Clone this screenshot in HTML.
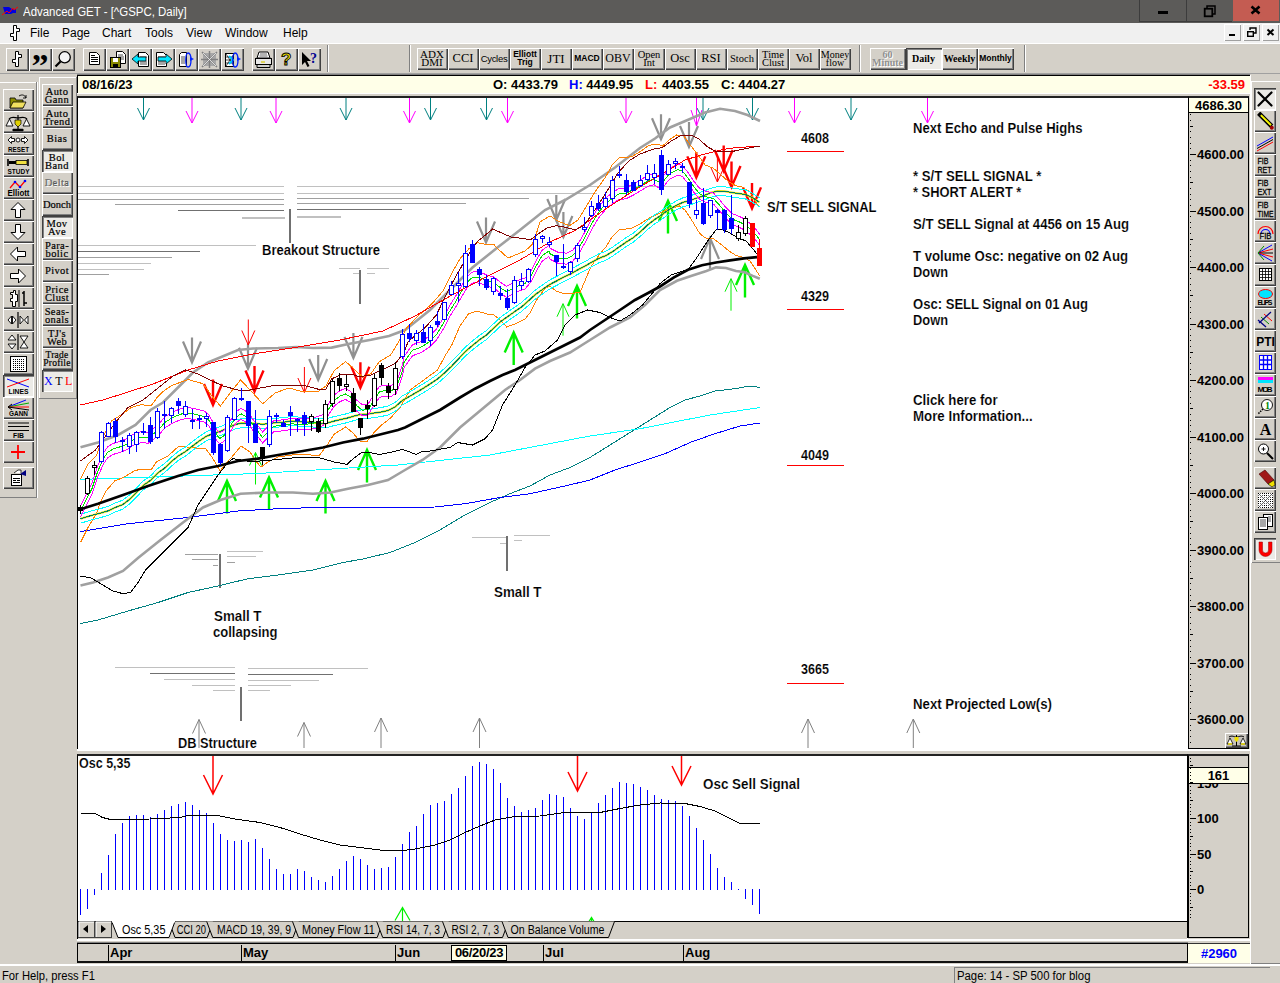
<!DOCTYPE html><html><head><meta charset="utf-8"><title>Advanced GET</title><style>
*{box-sizing:border-box;margin:0;padding:0}
html,body{width:1280px;height:983px;overflow:hidden;background:#d4d0c8;font-family:"Liberation Sans",sans-serif;font-size:12px;color:#000}
.a{position:absolute}
#title{left:0;top:0;width:1280px;height:23px;background:#5c5b59;color:#fff;font-size:12px;line-height:22px}
#title .t{left:23px;top:1px;white-space:nowrap;transform:scaleX(.955);transform-origin:0 0}
.wb{top:0;height:22px;border-left:1px solid #3c3c3c;border-bottom:1px solid #3c3c3c;color:#000;text-align:center;font-weight:bold}
#menu{left:0;top:23px;width:1280px;height:20px;background:#f0f0f0;font-size:12px;line-height:20px}
#menu span{position:absolute;top:0;white-space:nowrap}
.mb{top:25px;width:17px;height:16px;background:#f0f0f0;box-shadow:inset 1px 1px #fff,inset -1px -1px #a0a0a0;font-size:10px;font-weight:bold;text-align:center;line-height:15px}
.btn{position:absolute;background:#d4d0c8;box-shadow:inset 1px 1px #fff,inset -1px -1px #404040,inset -2px -2px #808080;overflow:hidden}
.btn.p{box-shadow:inset 1px 1px #404040,inset 2px 2px #808080,inset -1px -1px #fff;background:#ecebe7}
.tb{top:48px;width:23px;height:23px}
.sb{top:48px;width:31px;height:22px;font-family:"Liberation Serif",serif;font-size:11px;line-height:9px;text-align:center;white-space:nowrap}
.sb span{position:absolute;left:0;right:1px;text-align:center}
.lb{left:3px;width:31px;height:22px}
.lb2{left:42px;width:31px;height:22px;font-family:"Liberation Serif",serif;font-size:10.5px;line-height:9px;text-align:center;font-weight:normal;-webkit-text-stroke:.2px #000;white-space:nowrap;letter-spacing:.4px}
.lb2 span{position:absolute;left:0;right:1px;text-align:center}
.rb{left:1254px;width:22px;height:22px}
.ic{position:absolute;left:0;top:0}
.tiny{font-family:"Liberation Sans",sans-serif;font-size:8px;font-weight:bold;letter-spacing:0}
.sunk{box-shadow:inset 1px 1px #808080,inset -1px -1px #fff}
.bt{font-weight:bold;white-space:nowrap}
.rb{left:1254px;width:22px;height:22px}</style></head><body><div id="title" class="a"><svg class="ic" width="22" height="22" viewBox="0 0 22 22" ><path d="M3 7h6l3 2h4v4h-3l-2 1h-6z" fill="#0000e0"/><path d="M2 15l5-4 2 2 4-5 1 2 4-3" stroke="#ff0000" stroke-width="1" fill="none"/></svg><div class="a t">Advanced GET - [^GSPC, Daily]</div><div class="a wb" style="left:1139px;width:47px"><svg class="ic" width="46" height="22" viewBox="0 0 46 22" ><rect x="18" y="11" width="10" height="3" fill="#000"/></svg></div><div class="a wb" style="left:1186px;width:46px"><svg class="ic" width="46" height="22" viewBox="0 0 46 22" ><path d="M20 8v-2h8v8h-2" stroke="#000" stroke-width="1.5" fill="none"/><rect x="17.7" y="8.7" width="7.6" height="7.6" stroke="#000" stroke-width="1.8" fill="none"/></svg></div><div class="a wb" style="left:1232px;width:48px;background:#c45c52;border-left:0;border-bottom:0;height:21px;width:46px;left:1233px"><svg class="ic" width="46" height="22" viewBox="0 0 46 22" ><path d="M18.5 6.5l8 7M26.500 6.500l-8 7" stroke="#000" stroke-width="2.6" fill="none"/></svg></div></div><div id="menu" class="a"><svg class="ic" width="30" height="20" viewBox="0 0 30 20" ><path d="M13.500 2.500h3v3h3v3h-3v9h-3v-4h-3v-3h3z" fill="#fff" stroke="#000" stroke-width="1"/></svg><span style="left:30px">File</span><span style="left:62px">Page</span><span style="left:102px">Chart</span><span style="left:145px">Tools</span><span style="left:186px">View</span><span style="left:225px">Window</span><span style="left:283px">Help</span></div><div class="a mb" style="left:1224px;top:24px;height:17px"><svg class="ic" width="17" height="16" viewBox="0 0 17 16" ><rect x="5" y="10" width="6" height="2" fill="#000"/></svg></div><div class="a mb" style="left:1243px;top:24px;height:17px"><svg class="ic" width="17" height="16" viewBox="0 0 17 16" ><path d="M7 6v-2h6v5h-2" stroke="#000" stroke-width="1.400" fill="none"/><rect x="4.7" y="7.700" width="5.600" height="4.600" stroke="#000" stroke-width="1.400" fill="none"/></svg></div><div class="a mb" style="left:1262px;top:24px;height:17px"><svg class="ic" width="17" height="16" viewBox="0 0 17 16" ><path d="M5.500 5.500l6 5.500M11.500 5.500l-6 5.500" stroke="#000" stroke-width="2" fill="none"/></svg></div><div class="a" style="left:0;top:43px;width:1280px;height:31px;background:#d4d0c8;border-top:1px solid #fff;box-shadow:0 -1px #a0a0a0 inset"></div><div class="btn tb" style="left:6px"><svg class="ic" width="23" height="23" viewBox="0 0 23 23" ><path d="M9.500 3.500h3v3h3v3h-3v9h-3v-4h-3v-3h3z" fill="#fff" stroke="#000" stroke-width="1"/></svg></div><div class="btn tb" style="left:29px"><svg class="ic" width="23" height="23" viewBox="0 0 23 23" ><text x="2.500" y="29" font-size="34" font-weight="bold" font-family="Liberation Serif,serif">”</text></svg></div><div class="btn tb" style="left:52px"><svg class="ic" width="23" height="23" viewBox="0 0 23 23" ><circle cx="12.700" cy="9.300" r="5.600" fill="#f4f4f4" stroke="#000" stroke-width="1.300"/><path d="M8.500 13.500l-5 5" stroke="#000" stroke-width="2.200"/></svg></div><div class="btn tb" style="left:83px"><svg class="ic" width="23" height="23" viewBox="0 0 23 23" ><path d="M6.500 4.500h7l3 3v9h-10z" fill="#fff" stroke="#000"/><path d="M8 7.500h4M8 9.500h7M8 11.500h7M8 13.500h7" stroke="#000" stroke-width="1" shape-rendering="crispEdges"/></svg></div><div class="btn tb" style="left:106px"><svg class="ic" width="23" height="23" viewBox="0 0 23 23" ><path d="M10.500 3.500h6l3 3v9h-9z" fill="#fff" stroke="#000"/><path d="M12 7h5M12 9h6M12 11h6" stroke="#000" stroke-width=".7"/><rect x="4.500" y="9.500" width="10" height="10" fill="#8a8a00" stroke="#000"/><rect x="7" y="10" width="5" height="4" fill="#fff"/><rect x="7" y="16" width="5" height="3" fill="#000"/></svg></div><div class="btn tb" style="left:129px"><svg class="ic" width="23" height="23" viewBox="0 0 23 23" ><path d="M9.500 4.500h7l3 3v11h-10z" fill="#fff" stroke="#000"/><path d="M11 9h7M11 14h7M11 16h7" stroke="#000" stroke-width=".7"/><path d="M3 11l6-5v3h8v4h-8v3z" fill="#00e5ff" stroke="#000" stroke-width=".8"/></svg></div><div class="btn tb" style="left:152px"><svg class="ic" width="23" height="23" viewBox="0 0 23 23" ><path d="M4.500 4.500h7l3 3v11h-10z" fill="#fff" stroke="#000"/><path d="M6 9h7M6 14h7M6 16h7" stroke="#000" stroke-width=".7"/><path d="M20 11l-6-5v3h-8v4h8v3z" fill="#00e5ff" stroke="#000" stroke-width=".8"/></svg></div><div class="btn tb" style="left:175px"><svg class="ic" width="23" height="23" viewBox="0 0 23 23" ><path d="M4.500 6.500l2-2h5v14h-7z" fill="#fff" stroke="#000"/><path d="M6 9h4M6 11h4M6 13h4M6 15h4" stroke="#000" stroke-width=".7"/><path d="M13 5c4 0 4 14 0 14c-3 0-3-14 0-14" fill="none" stroke="#0020ff" stroke-width="1.300"/><path d="M15 9l4 2-4 2z" fill="#0020ff"/></svg></div><div class="btn tb" style="left:198px"><svg class="ic" width="23" height="23" viewBox="0 0 23 23" ><rect x="5" y="5" width="13" height="13" fill="#a8a8a8"/><path d="M4 4l15 15M19 4l-15 15M11.500 3v17M3 11.500h17" stroke="#808080" stroke-width="1.500"/><path d="M5 5l13 13M18 5l-13 13" stroke="#f4f4f4" stroke-width=".8"/></svg></div><div class="btn tb" style="left:221px"><svg class="ic" width="23" height="23" viewBox="0 0 23 23" ><rect x="4.500" y="5.500" width="8" height="13" fill="#fff" stroke="#000"/><path d="M5 6l8 12M13 6l-8 12M5 9h8M5 12h8M5 15h8" stroke="#000" stroke-width=".7"/><path d="M8 8l4 4-4 4" stroke="#00c8ff" stroke-width="2" fill="none"/><path d="M14 5c4 0 4 14 0 14c-3 0-3-14 0-14" fill="none" stroke="#0020ff" stroke-width="1.300"/><path d="M16 9l4 2-4 2z" fill="#0020ff"/></svg></div><div class="btn tb" style="left:252px"><svg class="ic" width="23" height="23" viewBox="0 0 23 23" ><path d="M7 4h9l2 6h-13z" fill="#fff" stroke="#000"/><rect x="3.500" y="10.500" width="16" height="6" fill="#e8e8e8" stroke="#000"/><path d="M5 16.500h13v3h-13z" fill="#d0d0d0" stroke="#000"/><path d="M9 14h4" stroke="#d8c800" stroke-width="1.200"/><path d="M8 6h7M7.500 8h8" stroke="#000" stroke-width=".6"/></svg></div><div class="btn tb" style="left:275px"><svg class="ic" width="23" height="23" viewBox="0 0 23 23" ><text x="6" y="17" font-size="17" font-weight="bold" font-family="Liberation Sans,sans-serif" fill="#f0e000" stroke="#000" stroke-width=".9">?</text></svg></div><div class="btn tb" style="left:298px"><svg class="ic" width="23" height="23" viewBox="0 0 23 23" ><path d="M4 4v13l3-3 2.500 5 2-1-2.500-5h4z" fill="#000"/><text x="12" y="15" font-size="14" font-weight="bold" font-family="Liberation Serif,serif" fill="#000090">?</text></svg></div><div class="a" style="left:327px;top:45px;width:2px;height:27px;border-left:1px solid #808080;border-right:1px solid #fff"></div><div class="a" style="left:409px;top:45px;width:2px;height:27px;border-left:1px solid #808080;border-right:1px solid #fff"></div><div class="a" style="left:859px;top:45px;width:2px;height:27px;border-left:1px solid #808080;border-right:1px solid #fff"></div><div class="a" style="left:1024px;top:45px;width:2px;height:27px;border-left:1px solid #808080;border-right:1px solid #fff"></div><div class="btn sb" style="left:417px"><span style="top:2px;font-size:11px">ADX</span><span style="top:10px;font-size:11px">DMI</span></div><div class="btn sb" style="left:448px"><span style="top:6px;font-size:12.5px">CCI</span></div><div class="btn sb" style="left:479px"><span style="top:6px;font-size:9.5px;font-family:Liberation Sans,sans-serif;letter-spacing:-.3px">Cycles</span></div><div class="btn sb" style="left:510px"><span style="top:2px;font-size:8.5px;font-family:Liberation Sans,sans-serif;font-weight:bold">Elliott</span><span style="top:10px;font-size:8.5px;font-family:Liberation Sans,sans-serif;font-weight:bold">Trig</span></div><div class="btn sb" style="left:541px"><span style="top:6px;font-size:13px">JTI</span></div><div class="btn sb" style="left:572px"><span style="top:6px;font-size:8.5px;font-family:Liberation Sans,sans-serif;font-weight:bold">MACD</span></div><div class="btn sb" style="left:603px"><span style="top:6px;font-size:12px">OBV</span></div><div class="btn sb" style="left:634px"><span style="top:2px;font-size:10.5px">Open</span><span style="top:10px;font-size:10.5px">Int</span></div><div class="btn sb" style="left:665px"><span style="top:6px;font-size:12.5px">Osc</span></div><div class="btn sb" style="left:696px"><span style="top:6px;font-size:12.5px">RSI</span></div><div class="btn sb" style="left:727px"><span style="top:6px;font-size:10.5px">Stoch</span></div><div class="btn sb" style="left:758px"><span style="top:2px;font-size:10.5px">Time</span><span style="top:10px;font-size:10.5px">Clust</span></div><div class="btn sb" style="left:789px"><span style="top:6px;font-size:12.5px">Vol</span></div><div class="btn sb" style="left:820px"><span style="top:2px;font-size:10px">Money</span><span style="top:10px;font-size:10px">flow</span></div><div class="btn sb" style="left:870px;width:36px;font-weight:bold;font-size:10px;color:#909090;text-shadow:1px 1px #fff;"><span style="top:2px">60</span><span style="top:10px">Minute</span></div><div class="btn sb p" style="left:906px;width:36px;font-weight:bold;font-size:10px;"><span style="top:6px;">Daily</span></div><div class="btn sb" style="left:942px;width:36px;font-weight:bold;font-size:10px;"><span style="top:6px;">Weekly</span></div><div class="btn sb" style="left:978px;width:36px;font-weight:bold;font-size:10px;"><span style="top:6px;font-family:Liberation Sans,sans-serif;font-size:8.5px;">Monthly</span></div><div class="a" style="left:0;top:82px;width:38px;height:416px;box-shadow:inset -1px -1px #808080,inset 0 1px #fff;border-right:1px solid #fff"></div><div class="a" style="left:39px;top:77px;width:38px;height:322px;box-shadow:inset -1px -1px #808080,inset 1px 1px #fff"></div><div class="btn lb" style="top:89px"><svg class="ic" width="30" height="22" viewBox="0 0 30 22" ><path d="M7 9h5l1 2h7v8h-13z" fill="#8c8c00" stroke="#000" stroke-width=".8"/><path d="M7 19l3-6h13l-3 6z" fill="#f0e060" stroke="#000" stroke-width=".8"/><path d="M16 7c3-2 6-1 7 2m0-3v3h-3" stroke="#000" stroke-width=".9" fill="none"/></svg></div><div class="btn lb" style="top:111px"><svg class="ic" width="30" height="22" viewBox="0 0 30 22" ><path d="M15 4v15M9 19h12M6 8c3-3 6-1 9-1s6-2 9 1" stroke="#000" stroke-width="1.200" fill="none"/><path d="M3 15l3.500-7 3.500 7zM20 15l3.500-7 3.500 7z" fill="#fff" stroke="#000" stroke-width=".9"/><path d="M12 9h6v4l-3 3-3-3z" fill="#e0d000" stroke="#000" stroke-width=".7"/><path d="M10 19h10" stroke="#000" stroke-width="2.500"/></svg></div><div class="btn lb" style="top:133px"><svg class="ic" width="30" height="22" viewBox="0 0 30 22" ><path d="M5 7l3.500-3.500v2h3v3h-3v2zM25 7l-3.500-3.500v2h-3v3h3v2z" fill="#fff" stroke="#000" stroke-width=".9"/><circle cx="15" cy="7" r="2" fill="#fff" stroke="#000" stroke-width=".9"/><text x="15.5" y="18.5" font-size="7.5" font-weight="bold" font-family="Liberation Sans,sans-serif" text-anchor="middle" textLength="21" lengthAdjust="spacingAndGlyphs">RESET</text></svg></div><div class="btn lb" style="top:155px"><svg class="ic" width="30" height="22" viewBox="0 0 30 22" ><path d="M5 4v7M25 4v7" stroke="#000" stroke-width="1.600"/><rect x="6" y="6" width="7" height="3" fill="#000"/><rect x="13" y="5.500" width="11" height="4" fill="#f0e040" stroke="#000" stroke-width=".8"/><text x="15.5" y="18.5" font-size="7.5" font-weight="bold" font-family="Liberation Sans,sans-serif" text-anchor="middle" textLength="22" lengthAdjust="spacingAndGlyphs">STUDY</text></svg></div><div class="btn lb" style="top:177px"><svg class="ic" width="30" height="22" viewBox="0 0 30 22" ><path d="M7 11l5-6 5 5 5-6" stroke="#f00" stroke-width="1.200" fill="none"/><circle cx="12" cy="5" r="1.300" fill="#00f"/><circle cx="17" cy="10" r="1.300" fill="#00f"/><circle cx="22" cy="4" r="1.300" fill="#00f"/><text x="15.5" y="18.5" font-size="9" font-weight="bold" font-family="Liberation Sans,sans-serif" text-anchor="middle" textLength="22" lengthAdjust="spacingAndGlyphs">Elliott</text></svg></div><div class="btn lb" style="top:199px"><svg class="ic" width="30" height="22" viewBox="0 0 30 22" ><path d="M15 3.500l7 7h-4.500v8h-5v-8h-4.500z" fill="#fff" stroke="#000" stroke-width="1"/></svg></div><div class="btn lb" style="top:221px"><svg class="ic" width="30" height="22" viewBox="0 0 30 22" ><path d="M15 18.500l7-7h-4.500v-8h-5v8h-4.500z" fill="#fff" stroke="#000" stroke-width="1"/></svg></div><div class="btn lb" style="top:243px"><svg class="ic" width="30" height="22" viewBox="0 0 30 22" ><path d="M7.500 11l7-7v4.500h8v5h-8v4.500z" fill="#fff" stroke="#000" stroke-width="1"/></svg></div><div class="btn lb" style="top:265px"><svg class="ic" width="30" height="22" viewBox="0 0 30 22" ><path d="M22.500 11l-7-7v4.500h-8v5h8v4.500z" fill="#fff" stroke="#000" stroke-width="1"/></svg></div><div class="btn lb" style="top:287px"><svg class="ic" width="30" height="22" viewBox="0 0 30 22" ><path d="M10.500 3.500h2v4h2v7h-2v5h-3v-5h-2v-3h2v-4h-2v-2h3z" fill="#fff" stroke="#000" stroke-width="1"/><path d="M16 3v17" stroke="#000" stroke-width="1"/><path d="M21 4v15M19 6h2M21 16h3" stroke="#000" stroke-width="1.500"/></svg></div><div class="btn lb" style="top:309px"><svg class="ic" width="30" height="22" viewBox="0 0 30 22" ><path d="M15 3v16" stroke="#000" stroke-width="1.200"/><path d="M5 11l3.500-4v8zM13 11l-3.500-4v8zM17 7v8l3.500-4zM25 7v8l-3.500-4z" fill="#fff" stroke="#000" stroke-width=".9"/></svg></div><div class="btn lb" style="top:331px"><svg class="ic" width="30" height="22" viewBox="0 0 30 22" ><path d="M15 3v16" stroke="#000" stroke-width="1.200"/><path d="M9 4l4 5h-8zM9 18l4-5h-8zM17 5h8l-4 6 4 6h-8l4-6z" fill="#fff" stroke="#000" stroke-width=".9"/></svg></div><div class="btn lb" style="top:353px"><svg class="ic" width="30" height="22" viewBox="0 0 30 22" ><defs><pattern id="dots" width="2" height="2" patternUnits="userSpaceOnUse"><rect width="1" height="1" fill="#000"/></pattern></defs><rect x="7.500" y="3.500" width="16" height="15" fill="#fff" stroke="#000"/><rect x="9" y="5" width="13" height="12" fill="url(#dots)"/></svg></div><div class="btn lb p" style="top:375px"><svg class="ic" width="30" height="22" viewBox="0 0 30 22" ><path d="M4 4l22 8" stroke="#00f" stroke-width="1"/><path d="M4 12l22-8" stroke="#f00" stroke-width="1"/><text x="15.5" y="18.5" font-size="7.5" font-weight="bold" font-family="Liberation Sans,sans-serif" text-anchor="middle" textLength="20" lengthAdjust="spacingAndGlyphs">LINES</text></svg></div><div class="btn lb" style="top:397px"><svg class="ic" width="30" height="22" viewBox="0 0 30 22" ><path d="M5 10l18-7" stroke="#00f"/><path d="M5 10l21-4" stroke="#0a0"/><path d="M5 10h21" stroke="#f00"/><path d="M5 10l21 3" stroke="#000"/><path d="M9 7l-4 3 4 3" stroke="#000" fill="none"/><text x="15.5" y="18.5" font-size="7.5" font-weight="bold" font-family="Liberation Sans,sans-serif" text-anchor="middle" textLength="19" lengthAdjust="spacingAndGlyphs">GANN</text></svg></div><div class="btn lb" style="top:419px"><svg class="ic" width="30" height="22" viewBox="0 0 30 22" ><path d="M5 4h21M5 7.500h21M5 11.500h21" stroke="#000" stroke-width="1.200"/><text x="15.5" y="18.5" font-size="7.5" font-weight="bold" font-family="Liberation Sans,sans-serif" text-anchor="middle" textLength="11" lengthAdjust="spacingAndGlyphs">FIB</text></svg></div><div class="btn lb" style="top:441px"><svg class="ic" width="30" height="22" viewBox="0 0 30 22" ><path d="M15 4v14M8 11h14" stroke="#f00" stroke-width="1.800"/></svg></div><div class="btn lb" style="top:467px"><svg class="ic" width="30" height="22" viewBox="0 0 30 22" ><rect x="8.500" y="7.500" width="10" height="11" fill="#fff" stroke="#000"/><path d="M10 11.500h7M10 13.500h3M14 13.500h3M10 15.500h7" stroke="#000" stroke-width="1" shape-rendering="crispEdges"/><path d="M11 6l4-3h3v3" fill="#fff" stroke="#000" stroke-width=".8"/><path d="M17 7l6-4v6z" fill="#000080"/></svg></div><div class="btn lb2" style="top:84px;"><span style="top:3px;">Auto</span><span style="top:11px;">Gann</span></div><div class="btn lb2" style="top:106px;"><span style="top:3px;">Auto</span><span style="top:11px;">Trend</span></div><div class="btn lb2" style="top:128px;"><span style="top:6px;font-size:10.5px;letter-spacing:.4px">Bias</span></div><div class="btn lb2 p" style="top:150px;"><span style="top:3px;">Bol</span><span style="top:11px;">Band</span></div><div class="btn lb2" style="top:172px;color:#909090;text-shadow:1px 1px #fff;"><span style="top:6px;font-size:10.5px;letter-spacing:.4px">Delta</span></div><div class="btn lb2" style="top:194px;"><span style="top:6px;font-size:10.5px;letter-spacing:0">Donch</span></div><div class="btn lb2 p" style="top:216px;"><span style="top:3px;">Mov</span><span style="top:11px;">Ave</span></div><div class="btn lb2" style="top:238px;"><span style="top:3px;">Para-</span><span style="top:11px;">bolic</span></div><div class="btn lb2" style="top:260px;"><span style="top:6px;font-size:10.5px;letter-spacing:.4px">Pivot</span></div><div class="btn lb2" style="top:282px;"><span style="top:3px;">Price</span><span style="top:11px;">Clust</span></div><div class="btn lb2" style="top:304px;"><span style="top:3px;">Seas-</span><span style="top:11px;">onals</span></div><div class="btn lb2" style="top:326px;"><span style="top:3px;">TJ's</span><span style="top:11px;">Web</span></div><div class="btn lb2" style="top:348px;"><span style="top:3px;font-size:9.5px;letter-spacing:.2px;">Trade</span><span style="top:11px;font-size:9.5px;letter-spacing:.2px;">Profile</span></div><div class="btn lb2 p" style="top:370px;"><span style="top:7px;left:2px;font-size:12px;font-weight:normal;letter-spacing:2.5px;-webkit-text-stroke:0"><b style="color:#00f;font-weight:normal">X</b>T<b style="color:#f00;font-weight:normal">L</b></span></div><div class="a" style="left:1251px;top:81px;width:29px;height:482px;box-shadow:inset 1px 1px #fff,inset 0 -1px #808080"></div><div class="btn rb p" style="top:88px"><svg class="ic" width="22" height="22" viewBox="0 0 22 22" ><path d="M4.500 4.500l13 13M17.500 4.500l-13 13" stroke="#000" stroke-width="2.200" stroke-linecap="round"/></svg></div><div class="btn rb" style="top:110px"><svg class="ic" width="22" height="22" viewBox="0 0 22 22" ><path d="M4 5l2.500-2.500 12 12-2.500 2.500z" fill="#f0f000" stroke="#000" stroke-width="1.200"/><path d="M5.500 5.500l11 11" stroke="#000" stroke-width=".7"/><path d="M3.500 4.500l2.500-2.500 2 2-2.500 2.500z" fill="#000"/><circle cx="17.800" cy="17.800" r="2" fill="#a00000"/></svg></div><div class="btn rb" style="top:132px"><svg class="ic" width="22" height="22" viewBox="0 0 22 22" ><path d="M3 14l16-9" stroke="#00f"/><path d="M3 16.500l16-9" stroke="#000"/><path d="M3 19l16-9" stroke="#f00"/></svg></div><div class="btn rb" style="top:154px"><svg class="ic" width="22" height="22" viewBox="0 0 22 22" ><text x="3.500" y="10" font-size="9.500" font-family="Liberation Sans,sans-serif" textLength="11" lengthAdjust="spacingAndGlyphs" stroke="#000" stroke-width=".3">FIB</text><text x="3.500" y="18.500" font-size="9.500" font-family="Liberation Sans,sans-serif" textLength="14" lengthAdjust="spacingAndGlyphs" stroke="#000" stroke-width=".3">RET</text></svg></div><div class="btn rb" style="top:176px"><svg class="ic" width="22" height="22" viewBox="0 0 22 22" ><text x="3.500" y="10" font-size="9.500" font-family="Liberation Sans,sans-serif" textLength="11" lengthAdjust="spacingAndGlyphs" stroke="#000" stroke-width=".3">FIB</text><text x="3.500" y="18.500" font-size="9.500" font-family="Liberation Sans,sans-serif" textLength="14" lengthAdjust="spacingAndGlyphs" stroke="#000" stroke-width=".3">EXT</text></svg></div><div class="btn rb" style="top:198px"><svg class="ic" width="22" height="22" viewBox="0 0 22 22" ><text x="3.500" y="10" font-size="9.500" font-family="Liberation Sans,sans-serif" textLength="11" lengthAdjust="spacingAndGlyphs" stroke="#000" stroke-width=".3">FIB</text><text x="3.500" y="18.500" font-size="9.500" font-family="Liberation Sans,sans-serif" textLength="16" lengthAdjust="spacingAndGlyphs" stroke="#000" stroke-width=".3">TIME</text></svg></div><div class="btn rb" style="top:220px"><svg class="ic" width="22" height="22" viewBox="0 0 22 22" ><path d="M4 14a7.500 7.500 0 0 1 15 0" fill="none" stroke="#f00" stroke-width="1.200"/><path d="M7 14a4.500 4.500 0 0 1 9 0" fill="none" stroke="#00f" stroke-width="1.200"/><text x="5.500" y="19" font-size="9" font-family="Liberation Sans,sans-serif" textLength="12" lengthAdjust="spacingAndGlyphs" stroke="#000" stroke-width=".3">FIB</text></svg></div><div class="btn rb" style="top:242px"><svg class="ic" width="22" height="22" viewBox="0 0 22 22" ><path d="M4 11l14-8" stroke="#00f"/><path d="M4 11l15-4" stroke="#f00"/><path d="M4 11h15" stroke="#000"/><path d="M4 11l15 4" stroke="#f00"/><path d="M4 11l14 8" stroke="#00f"/><path d="M10 4l-6 7 6 7" stroke="#080" fill="none"/></svg></div><div class="btn rb" style="top:264px"><svg class="ic" width="22" height="22" viewBox="0 0 22 22" ><rect x="5.500" y="4.500" width="12" height="12" fill="#fff" stroke="#000"/><path d="M8.500 4v13M11.500 4v13M14.500 4v13M5 7.500h13M5 10.500h13M5 13.500h13" stroke="#000" stroke-width=".8"/></svg></div><div class="btn rb" style="top:286px"><svg class="ic" width="22" height="22" viewBox="0 0 22 22" ><ellipse cx="11.500" cy="8" rx="7" ry="4.500" fill="#00e5ff" stroke="#f00" stroke-width="1"/><text x="3.500" y="19" font-size="7" font-family="Liberation Sans,sans-serif" font-weight="bold" textLength="15">ELIPS</text></svg></div><div class="btn rb" style="top:308px"><svg class="ic" width="22" height="22" viewBox="0 0 22 22" ><path d="M4 12l8 7" stroke="#000080" stroke-width="1.300"/><path d="M7 9l8 7" stroke="#080"/><path d="M10 6l8 7" stroke="#f00"/><path d="M5 15l12-11" stroke="#000080" stroke-width="1.200"/></svg></div><div class="btn rb" style="top:330px"><svg class="ic" width="22" height="22" viewBox="0 0 22 22" ><text x="11.500" y="16" font-size="12" font-family="Liberation Sans,sans-serif" font-weight="bold" text-anchor="middle">PTI</text></svg></div><div class="btn rb" style="top:352px"><svg class="ic" width="22" height="22" viewBox="0 0 22 22" ><rect x="5.500" y="3.500" width="12" height="14" fill="#fff" stroke="#00f"/><path d="M9.500 3v15M13.500 3v15M5 8h13M5 12.500h13" stroke="#00f" stroke-width="1.300"/></svg></div><div class="btn rb" style="top:374px"><svg class="ic" width="22" height="22" viewBox="0 0 22 22" ><rect x="4" y="3" width="15" height="3" fill="#f0f"/><rect x="4" y="6" width="15" height="3" fill="#00e5ff"/><text x="3.500" y="18" font-size="8" font-family="Liberation Sans,sans-serif" font-weight="bold" textLength="15">MOB</text></svg></div><div class="btn rb" style="top:396px"><svg class="ic" width="22" height="22" viewBox="0 0 22 22" ><circle cx="13" cy="9" r="5.500" fill="#fff" stroke="#000" stroke-width=".9"/><path d="M9 13l-5 5" stroke="#000" stroke-width="1.500" stroke-dasharray="1.500 1"/><text x="11" y="13" font-size="10" font-weight="bold" fill="#080" font-family="Liberation Serif,serif">1</text></svg></div><div class="btn rb" style="top:418px"><svg class="ic" width="22" height="22" viewBox="0 0 22 22" ><text x="11.500" y="17" font-size="16" font-family="Liberation Serif,serif" font-weight="bold" text-anchor="middle">A</text></svg></div><div class="btn rb" style="top:440px"><svg class="ic" width="22" height="22" viewBox="0 0 22 22" ><circle cx="9.500" cy="9" r="5" fill="#fff" stroke="#000" stroke-width="1"/><path d="M13 13l6 6" stroke="#000" stroke-width="2"/><path d="M7.500 9h4M9.500 7v4" stroke="#000" stroke-width=".9"/></svg></div><div class="btn rb" style="top:467px"><svg class="ic" width="22" height="22" viewBox="0 0 22 22" ><path d="M5 7l6-4 9 10-6 4z" fill="#a01818" stroke="#400" stroke-width=".6"/><path d="M14 17l6-4 1 5-3 2z" fill="#f0e000" stroke="#000" stroke-width=".6"/></svg></div><div class="btn rb" style="top:489px"><svg class="ic" width="22" height="22" viewBox="0 0 22 22" ><defs><pattern id="d2" width="2" height="2" patternUnits="userSpaceOnUse"><rect width="1" height="1" fill="#000"/></pattern></defs><rect x="4" y="4" width="15" height="15" fill="#fff"/><rect x="4" y="4" width="15" height="15" fill="url(#d2)"/><path d="M5 5l13 13M18 5l-13 13" stroke="#fff" stroke-width="2.500"/><path d="M5 5l13 13M18 5l-13 13" stroke="#000" stroke-width=".6"/></svg></div><div class="btn rb" style="top:511px"><svg class="ic" width="22" height="22" viewBox="0 0 22 22" ><rect x="9.500" y="3.500" width="9" height="12" fill="#fff" stroke="#000"/><rect x="4.500" y="6.500" width="9" height="12" fill="#fff" stroke="#000"/><path d="M6 9h6M6 11h6M6 13h6M6 15h6M14 6h3M14 8h3M14 10h3" stroke="#000" stroke-width=".7"/></svg></div><div class="btn rb p" style="top:538px"><svg class="ic" width="22" height="22" viewBox="0 0 22 22" ><path d="M5 4v8a6.500 6.500 0 0 0 13 0v-8h-3.500v8a3 3 0 0 1-6 0v-8z" fill="#f00" stroke="#900" stroke-width=".5"/></svg></div><div class="a" style="left:77px;top:75px;width:1173px;height:18px;background:#ffffe8;border-top:1px solid #000;border-left:1px solid #000;box-shadow:0 -1px #808080,0 1px #fff,1px 0 #fff"></div><div class="a bt" style="left:82px;top:77px;font-size:13px;line-height:15px">08/16/23</div><div class="a bt" style="left:493px;top:77px;font-size:13px;line-height:15px">O: 4433.79</div><div class="a bt" style="left:569px;top:77px;font-size:13px;line-height:15px"><span style="color:#00f">H:</span> 4449.95</div><div class="a bt" style="left:645px;top:77px;font-size:13px;line-height:15px"><span style="color:#f00">L:</span><span class="a" style="left:17px">4403.55</span></div><div class="a bt" style="left:721px;top:77px;font-size:13px;line-height:15px">C: 4404.27</div><div class="a bt" style="left:1180px;width:65px;text-align:right;color:#f00;top:77px;font-size:13px;line-height:15px">-33.59</div><div class="a" style="left:77px;top:96px;width:1112px;height:653px;background:#fff;border-top:2px solid #000;border-left:1px solid #000;border-top-color:#222"></div><div class="a" style="left:1188px;top:96px;width:61px;height:653px;background:#d4d0c8;border-left:1px solid #000;border-top:2px solid #222;border-right:1px solid #000;border-bottom:1px solid #000"></div><div class="a bt" style="left:1189px;top:98px;width:59px;height:15px;background:#ffffe8;border-bottom:1px solid #000;text-align:center;font-size:13px;line-height:15px">4686.30</div><div class="a bt" style="left:1197px;top:147px;font-size:13px;line-height:15px">4600.00</div><div class="a bt" style="left:1197px;top:204px;font-size:13px;line-height:15px">4500.00</div><div class="a bt" style="left:1197px;top:260px;font-size:13px;line-height:15px">4400.00</div><div class="a bt" style="left:1197px;top:317px;font-size:13px;line-height:15px">4300.00</div><div class="a bt" style="left:1197px;top:373px;font-size:13px;line-height:15px">4200.00</div><div class="a bt" style="left:1197px;top:430px;font-size:13px;line-height:15px">4100.00</div><div class="a bt" style="left:1197px;top:486px;font-size:13px;line-height:15px">4000.00</div><div class="a bt" style="left:1197px;top:543px;font-size:13px;line-height:15px">3900.00</div><div class="a bt" style="left:1197px;top:599px;font-size:13px;line-height:15px">3800.00</div><div class="a bt" style="left:1197px;top:656px;font-size:13px;line-height:15px">3700.00</div><div class="a bt" style="left:1197px;top:712px;font-size:13px;line-height:15px">3600.00</div><div class="a" style="left:77px;top:749px;width:1174px;height:2px;background:#fff"></div><div class="btn" style="left:1225px;top:733px;width:23px;height:15px;background:#c8c4bc"><svg class="ic" width="23" height="15" viewBox="0 0 23 15" ><path d="M11.500 2v11M7 13h9M4 4c3-2 5 0 7.500 0s4.500-2 7.500 0" stroke="#000" stroke-width="1" fill="none"/><path d="M2 11l3-6 3 6zM15 11l3-6 3 6z" fill="#fff" stroke="#000" stroke-width=".8"/><path d="M9.500 4h4v3l-2 2-2-2z" fill="#f0e000"/><path d="M3 11h4M16 11h4" stroke="#f0e000" stroke-width="1.500"/></svg></div><div class="a" style="left:77px;top:754px;width:1111px;height:185px;background:#fff;border-top:2px solid #222;border-left:1px solid #000"></div><div class="a" style="left:1187px;top:754px;width:62px;height:184px;background:#d4d0c8;border-left:2px solid #000;border-top:2px solid #222;border-right:1px solid #000;border-bottom:1px solid #000"></div><div class="a bt" style="left:1197px;top:776px;font-size:13px;line-height:15px">150</div><div class="a" style="left:1190px;top:783px;width:6px;height:1px;background:#000"></div><div class="a bt" style="left:1197px;top:811px;font-size:13px;line-height:15px">100</div><div class="a" style="left:1190px;top:818px;width:6px;height:1px;background:#000"></div><div class="a bt" style="left:1197px;top:847px;font-size:13px;line-height:15px">50</div><div class="a" style="left:1190px;top:854px;width:6px;height:1px;background:#000"></div><div class="a bt" style="left:1197px;top:882px;font-size:13px;line-height:15px">0</div><div class="a" style="left:1190px;top:889px;width:6px;height:1px;background:#000"></div><div class="a bt" style="left:1189px;top:767px;width:59px;height:17px;background:#ffffe8;border-top:1px solid #000;border-bottom:1px solid #000;text-align:center;font-size:13px;line-height:15px">161</div><div class="a" style="left:78px;top:921px;width:1109px;height:18px;background:#d4d0c8;border-top:1px solid #000"></div><div class="a" style="left:77px;top:943px;width:1111px;height:20px;background:#d4d0c8;border-top:1px solid #000;box-shadow:0 -1px #808080;border-left:1px solid #000;border-right:1px solid #000;border-bottom:2px solid #111"></div><div class="a bt" style="left:108px;top:945px;height:16px;border-left:1px solid #000;padding-left:1px;font-size:13px;line-height:16px">Apr</div><div class="a bt" style="left:241px;top:945px;height:16px;border-left:1px solid #000;padding-left:1px;font-size:13px;line-height:16px">May</div><div class="a bt" style="left:395px;top:945px;height:16px;border-left:1px solid #000;padding-left:1px;font-size:13px;line-height:16px">Jun</div><div class="a bt" style="left:543px;top:945px;height:16px;border-left:1px solid #000;padding-left:1px;font-size:13px;line-height:16px">Jul</div><div class="a bt" style="left:683px;top:945px;height:16px;border-left:1px solid #000;padding-left:1px;font-size:13px;line-height:16px">Aug</div><div class="a bt" style="left:451px;top:945px;width:56px;height:16px;border:1px solid #000;background:#ffffe8;font-size:13px;line-height:14px;text-align:center;letter-spacing:-.3px">06/20/23</div><div class="a bt" style="left:1188px;top:943px;width:62px;height:20px;background:#ffffe8;color:#00f;text-align:center;font-size:13px;line-height:20px;border-top:1px solid #333">#2960</div><div class="a" style="left:77px;top:939px;width:1174px;height:2px;background:#fff"></div><div class="a" style="left:1250px;top:76px;width:1px;height:888px;background:#fff"></div><div class="a" style="left:1251px;top:963px;width:29px;height:1px;background:#808080"></div><div class="a" style="left:0;top:964px;width:1280px;height:19px;background:#d4d0c8;border-top:2px solid #fff;font-size:12px;line-height:16px"><span class="a" style="left:2px;top:2px;white-space:nowrap;transform:scaleX(.935);transform-origin:0 0">For Help, press F1</span><span class="a" style="left:954px;top:1px;width:316px;height:16px;box-shadow:inset 1px 1px #808080"></span><span class="a" style="left:957px;top:2px;white-space:nowrap;transform:scaleX(.945);transform-origin:0 0">Page: 14 - SP 500 for blog</span></div><svg class="a" style="left:0;top:0" width="1280" height="983" viewBox="0 0 1280 983" font-family="Liberation Sans,sans-serif"><defs><clipPath id="cc"><rect x="78" y="98" width="1110" height="650"/></clipPath><clipPath id="oc"><rect x="78" y="756" width="1110" height="165"/></clipPath></defs><g clip-path="url(#cc)"><g shape-rendering="crispEdges"><rect x="78" y="186" width="206" height="1" fill="#c0c0c0"/><rect x="78" y="193" width="206" height="1" fill="#c0c0c0"/><rect x="78" y="199" width="206" height="1" fill="#a0a0a0"/><rect x="115" y="204" width="169" height="1" fill="#a0a0a0"/><rect x="178" y="210" width="106" height="1" fill="#707070"/><rect x="242" y="217" width="43" height="2" fill="#c0c0c0"/><rect x="297" y="186" width="390" height="1" fill="#c0c0c0"/><rect x="297" y="193" width="300" height="1" fill="#c0c0c0"/><rect x="297" y="198" width="232" height="1" fill="#a0a0a0"/><rect x="297" y="203" width="169" height="1" fill="#a0a0a0"/><rect x="297" y="209" width="105" height="1" fill="#707070"/><rect x="297" y="216" width="44" height="2" fill="#c0c0c0"/><rect x="289" y="209" width="2" height="34" fill="#707070"/><rect x="78" y="245" width="178" height="1" fill="#c0c0c0"/><rect x="78" y="251" width="122" height="1" fill="#707070"/><rect x="78" y="257" width="94" height="1" fill="#a0a0a0"/><rect x="78" y="263" width="73" height="1" fill="#c0c0c0"/><rect x="78" y="269" width="66" height="1" fill="#c0c0c0"/><rect x="78" y="274" width="31" height="1" fill="#a0a0a0"/><rect x="339" y="268" width="21" height="1" fill="#c0c0c0"/><rect x="367" y="268" width="22" height="1" fill="#c0c0c0"/><rect x="353" y="273" width="6" height="1" fill="#c0c0c0"/><rect x="367" y="273" width="8" height="1" fill="#c0c0c0"/><rect x="359" y="270" width="2" height="34" fill="#707070"/><rect x="185" y="554" width="33" height="1" fill="#a0a0a0"/><rect x="192" y="559" width="26" height="1" fill="#a0a0a0"/><rect x="213" y="565" width="5" height="1" fill="#a0a0a0"/><rect x="227" y="551" width="36" height="1" fill="#c0c0c0"/><rect x="227" y="556" width="29" height="1" fill="#c0c0c0"/><rect x="227" y="562" width="8" height="1" fill="#a0a0a0"/><rect x="219" y="554" width="2" height="34" fill="#707070"/><rect x="472" y="537" width="35" height="1" fill="#c0c0c0"/><rect x="500" y="543" width="7" height="1" fill="#c0c0c0"/><rect x="514" y="535" width="36" height="1" fill="#c0c0c0"/><rect x="514" y="540" width="8" height="1" fill="#c0c0c0"/><rect x="506" y="536" width="2" height="35" fill="#707070"/><rect x="115" y="667" width="120" height="1" fill="#c0c0c0"/><rect x="150" y="673" width="85" height="1" fill="#707070"/><rect x="164" y="679" width="71" height="1" fill="#c0c0c0"/><rect x="192" y="685" width="43" height="1" fill="#c0c0c0"/><rect x="213" y="690" width="22" height="1" fill="#c0c0c0"/><rect x="248" y="668" width="120" height="1" fill="#c0c0c0"/><rect x="248" y="674" width="85" height="1" fill="#707070"/><rect x="248" y="680" width="71" height="1" fill="#c0c0c0"/><rect x="248" y="685" width="43" height="1" fill="#c0c0c0"/><rect x="248" y="690" width="22" height="1" fill="#c0c0c0"/><rect x="240" y="687" width="2" height="34" fill="#707070"/></g><path d="M143.5 98.0V120.0M137.5 108.0L143.5 120.0L149.5 108.0" stroke="#008080" stroke-width="1" fill="none"/><path d="M241.0 98.0V120.0M235.0 108.0L241.0 120.0L247.0 108.0" stroke="#008080" stroke-width="1" fill="none"/><path d="M346.0 98.0V120.0M340.0 108.0L346.0 120.0L352.0 108.0" stroke="#008080" stroke-width="1" fill="none"/><path d="M430.5 98.0V120.0M424.5 108.0L430.5 120.0L436.5 108.0" stroke="#008080" stroke-width="1" fill="none"/><path d="M486.5 98.0V120.0M480.5 108.0L486.5 120.0L492.5 108.0" stroke="#008080" stroke-width="1" fill="none"/><path d="M703.0 98.0V120.0M697.0 108.0L703.0 120.0L709.0 108.0" stroke="#008080" stroke-width="1" fill="none"/><path d="M752.5 98.0V120.0M746.5 108.0L752.5 120.0L758.5 108.0" stroke="#008080" stroke-width="1" fill="none"/><path d="M851.0 98.0V120.0M845.0 108.0L851.0 120.0L857.0 108.0" stroke="#008080" stroke-width="1" fill="none"/><path d="M192.0 98.0V123.0M186.0 111.0L192.0 123.0L198.0 111.0" stroke="#ff00ff" stroke-width="1" fill="none"/><path d="M276.0 98.0V123.0M270.0 111.0L276.0 123.0L282.0 111.0" stroke="#ff00ff" stroke-width="1" fill="none"/><path d="M409.5 98.0V123.0M403.5 111.0L409.5 123.0L415.5 111.0" stroke="#ff00ff" stroke-width="1" fill="none"/><path d="M507.5 98.0V123.0M501.5 111.0L507.5 123.0L513.5 111.0" stroke="#ff00ff" stroke-width="1" fill="none"/><path d="M626.0 98.0V123.0M620.0 111.0L626.0 123.0L632.0 111.0" stroke="#ff00ff" stroke-width="1" fill="none"/><path d="M794.5 98.0V123.0M788.5 111.0L794.5 123.0L800.5 111.0" stroke="#ff00ff" stroke-width="1" fill="none"/><path d="M927.5 98.0V123.0M921.5 111.0L927.5 123.0L933.5 111.0" stroke="#ff00ff" stroke-width="1" fill="none"/><path d="M696.5 98.0V126.0M691.0 110.0L696.5 126.0L702.0 110.0" stroke="#ff00ff" stroke-width="1" fill="none"/><path d="M199.0 748.0V719.5M192.5 733.5L199.0 719.5L205.5 733.5" stroke="#808080" stroke-width="1" fill="none"/><path d="M304.0 748.0V722.5M297.5 736.5L304.0 722.5L310.5 736.5" stroke="#808080" stroke-width="1" fill="none"/><path d="M381.0 748.0V718.0M374.5 732.0L381.0 718.0L387.5 732.0" stroke="#808080" stroke-width="1" fill="none"/><path d="M479.5 748.0V718.0M473.0 732.0L479.5 718.0L486.0 732.0" stroke="#808080" stroke-width="1" fill="none"/><path d="M808.0 748.0V719.0M801.5 733.0L808.0 719.0L814.5 733.0" stroke="#808080" stroke-width="1" fill="none"/><path d="M913.3 748.0V719.0M906.8 733.0L913.3 719.0L919.8 733.0" stroke="#808080" stroke-width="1" fill="none"/><path d="M192.0 337.5V362.5M183.0 341.5L192.0 362.5L201.0 341.5" stroke="#909090" stroke-width="2.2" fill="none"/><path d="M248.0 343.7V368.7M239.0 347.7L248.0 368.7L257.0 347.7" stroke="#909090" stroke-width="2.2" fill="none"/><path d="M318.2 355.0V380.0M309.2 359.0L318.2 380.0L327.2 359.0" stroke="#909090" stroke-width="2.2" fill="none"/><path d="M353.4 333.0V358.0M344.4 337.0L353.4 358.0L362.4 337.0" stroke="#909090" stroke-width="2.2" fill="none"/><path d="M486.0 217.5V242.5M477.0 221.5L486.0 242.5L495.0 221.5" stroke="#909090" stroke-width="2.2" fill="none"/><path d="M556.3 195.0V220.0M547.3 199.0L556.3 220.0L565.3 199.0" stroke="#909090" stroke-width="2.2" fill="none"/><path d="M563.4 212.0V237.0M554.4 216.0L563.4 237.0L572.4 216.0" stroke="#909090" stroke-width="2.2" fill="none"/><path d="M661.0 114.3V139.3M652.0 118.3L661.0 139.3L670.0 118.3" stroke="#909090" stroke-width="2.2" fill="none"/><path d="M689.0 122.0V147.0M680.0 126.0L689.0 147.0L698.0 126.0" stroke="#909090" stroke-width="2.2" fill="none"/><path d="M710.0 269.5V238.0M701.0 259.0L710.0 238.0L719.0 259.0" stroke="#909090" stroke-width="2.2" fill="none"/><path d="M213.0 379.5V405.0M204.0 384.0L213.0 405.0L222.0 384.0" stroke="#ff0000" stroke-width="2.4" fill="none"/><path d="M254.5 366.0V391.5M245.5 370.5L254.5 391.5L263.5 370.5" stroke="#ff0000" stroke-width="2.4" fill="none"/><path d="M360.4 362.2V387.7M351.4 366.7L360.4 387.7L369.4 366.7" stroke="#ff0000" stroke-width="2.4" fill="none"/><path d="M696.3 151.9V177.4M687.3 156.4L696.3 177.4L705.3 156.4" stroke="#ff0000" stroke-width="2.4" fill="none"/><path d="M723.7 145.5V171.0M714.7 150.0L723.7 171.0L732.7 150.0" stroke="#ff0000" stroke-width="2.4" fill="none"/><path d="M731.5 161.5V187.0M722.5 166.0L731.5 187.0L740.5 166.0" stroke="#ff0000" stroke-width="2.4" fill="none"/><path d="M752.0 182.9V208.4M743.0 187.4L752.0 208.4L761.0 187.4" stroke="#ff0000" stroke-width="2.4" fill="none"/><path d="M248.3 319.5V345.0M241.8 330.5L248.3 345.0L254.8 330.5" stroke="#ff0000" stroke-width="1" fill="none"/><path d="M304.4 367.0V392.5M297.9 378.0L304.4 392.5L310.9 378.0" stroke="#ff0000" stroke-width="1" fill="none"/><path d="M717.4 156.5V182.0M710.9 167.5L717.4 182.0L723.9 167.5" stroke="#ff0000" stroke-width="1" fill="none"/><path d="M227.0 513.5V481.0M218.0 501.0L227.0 481.0L236.0 501.0" stroke="#00f000" stroke-width="2.4" fill="none"/><path d="M269.0 510.0V477.5M260.0 497.5L269.0 477.5L278.0 497.5" stroke="#00f000" stroke-width="2.4" fill="none"/><path d="M325.5 513.5V481.0M316.5 501.0L325.5 481.0L334.5 501.0" stroke="#00f000" stroke-width="2.4" fill="none"/><path d="M367.0 482.5V450.0M358.0 470.0L367.0 450.0L376.0 470.0" stroke="#00f000" stroke-width="2.4" fill="none"/><path d="M513.7 365.0V332.5M504.7 352.5L513.7 332.5L522.7 352.5" stroke="#00f000" stroke-width="2.4" fill="none"/><path d="M577.0 318.5V286.0M568.0 306.0L577.0 286.0L586.0 306.0" stroke="#00f000" stroke-width="2.4" fill="none"/><path d="M668.0 233.5V201.0M659.0 221.0L668.0 201.0L677.0 221.0" stroke="#00f000" stroke-width="2.4" fill="none"/><path d="M745.0 297.5V265.0M736.0 285.0L745.0 265.0L754.0 285.0" stroke="#00f000" stroke-width="2.4" fill="none"/><path d="M255.5 484.5V452.5M249.5 465.5L255.5 452.5L261.5 465.5" stroke="#00f000" stroke-width="1" fill="none"/><path d="M563.0 335.7V303.7M557.0 316.7L563.0 303.7L569.0 316.7" stroke="#00f000" stroke-width="1" fill="none"/><path d="M731.0 310.7V278.7M725.0 291.7L731.0 278.7L737.0 291.7" stroke="#00f000" stroke-width="1" fill="none"/><polyline points="80.5,623.5 98.0,620.0 128.0,611.0 158.0,602.5 188.0,592.5 218.0,586.0 248.0,578.7 278.0,575.0 313.0,570.0 343.0,562.5 363.0,559.0 390.0,552.5 415.0,542.5 440.0,530.0 465.0,515.0 490.0,502.5 510.0,493.7 530.0,486.0 550.0,475.0 570.0,467.5 590.0,457.5 610.0,445.0 630.0,432.5 650.0,420.0 670.0,407.5 685.0,400.0 700.0,396.0 715.0,391.0 735.0,388.7 750.0,386.0 760.0,387.5" fill="none" stroke="#008080" stroke-width="1"  shape-rendering="crispEdges"/><polyline points="80.5,479.4 258.0,473.5 398.0,465.0 490.0,455.0 590.0,436.0 640.0,428.7 710.0,415.0 760.0,407.5" fill="none" stroke="#00ffff" stroke-width="1"  shape-rendering="crispEdges"/><polyline points="80.5,531.6 128.0,523.7 188.0,517.5 238.0,511.0 278.0,508.7 318.0,507.5 398.0,507.5 435.0,507.0 465.0,503.7 500.0,497.5 530.0,493.7 565.0,486.0 590.0,480.0 615.0,470.0 640.0,462.0 665.0,453.7 690.0,442.5 715.0,433.7 740.0,426.0 760.0,423.0" fill="none" stroke="#0000ff" stroke-width="1"  shape-rendering="crispEdges"/><polyline points="80.5,447.3 98.0,442.5 118.0,435.0 135.5,425.0 150.5,410.0 163.0,402.5 178.0,387.5 193.0,372.5 208.0,362.5 238.0,350.0 253.0,348.5 278.0,348.0 296.4,347.0 313.0,348.0 331.6,347.6 348.4,344.0 371.0,339.8 389.0,336.0 405.0,330.0 430.0,310.0 455.0,285.0 472.5,267.5 497.5,247.5 520.0,230.0 545.0,210.0 565.0,200.0 590.0,185.0 615.0,167.5 640.0,148.0 655.0,138.5 670.0,127.5 690.0,119.0 705.0,112.5 720.0,108.7 735.0,111.0 747.5,115.0 760.0,121.0" fill="none" stroke="#a0a0a0" stroke-width="2.6" /><polyline points="80.5,585.4 93.0,582.5 108.0,577.5 123.0,571.0 138.0,558.0 160.5,540.0 183.0,522.5 203.0,507.5 220.5,500.0 240.5,493.7 268.0,492.5 293.0,492.5 313.0,493.7 330.5,492.5 348.0,488.7 368.0,485.0 388.0,480.0 405.0,470.0 422.5,460.0 440.0,447.5 460.0,427.5 475.0,415.0 490.0,402.5 505.0,390.0 520.0,380.0 535.0,368.7 550.0,361.0 570.0,352.5 590.0,340.0 610.0,327.5 630.0,317.5 645.0,305.0 660.0,290.0 677.0,280.8 691.0,275.9 706.4,271.0 716.0,267.4 726.0,268.0 736.0,271.0 744.0,272.0 752.8,275.9 759.8,278.7" fill="none" stroke="#a0a0a0" stroke-width="2.6" /><polyline points="80.5,478.8 80.8,478.4 87.8,464.4 96.3,456.0 103.3,436.0 111.7,420.8 123.0,413.7 131.4,407.4 141.3,404.6 151.0,406.0 156.7,398.0 162.4,392.0 170.8,386.0 179.0,382.8 188.0,379.5 203.0,383.7 213.0,397.5 220.5,406.0 230.5,392.5 240.5,380.0 250.0,389.8 262.7,403.8 275.0,393.0 289.0,388.0 303.4,391.9 317.5,391.9 326.0,386.0 334.0,370.8 345.6,361.6 354.0,369.0 362.5,377.0 371.0,373.6 379.0,362.0 390.6,355.0 397.0,344.5 407.0,327.6 418.0,316.0 432.0,303.7 443.0,291.0 452.0,272.8 460.0,258.7 468.7,249.0 477.0,242.6 487.0,244.7 494.0,244.7 501.0,251.7 508.0,258.0 516.5,254.5 525.0,251.0 532.0,244.7 536.0,234.8 540.0,222.0 550.0,215.8 558.4,221.4 569.7,225.6 578.0,220.0 586.6,206.0 595.0,191.9 606.0,176.4 612.0,165.0 619.0,158.0 631.6,156.7 640.0,151.8 648.4,145.5 657.0,144.0 662.5,146.0 669.5,139.8 676.6,135.0 683.6,135.6 690.6,145.5 697.7,154.6 705.0,165.0 713.0,168.0 720.0,174.0 729.0,182.0 736.0,185.9 741.6,186.6 750.0,192.0 758.4,206.0" fill="none" stroke="#ff8000" stroke-width="1"  shape-rendering="crispEdges"/><polyline points="80.5,542.5 88.0,527.5 96.3,513.6 100.5,502.0 106.0,491.0 114.6,481.0 124.4,477.0 134.0,471.0 141.0,469.0 151.0,470.0 156.7,461.6 168.0,456.0 179.0,446.0 190.5,447.5 206.0,449.0 213.0,458.7 220.0,471.0 225.6,464.0 232.7,456.0 241.0,446.0 250.0,452.0 255.6,460.8 261.0,467.0 268.0,462.0 278.0,457.0 292.0,455.0 306.0,454.5 319.0,455.9 326.0,446.7 334.4,434.0 345.6,427.0 352.7,432.7 359.7,441.0 366.7,441.8 372.0,434.8 380.8,425.6 390.6,418.0 400.0,407.5 410.0,390.0 422.5,381.0 437.5,370.0 445.0,356.0 452.0,344.5 460.0,326.0 468.7,313.6 477.0,311.0 487.0,314.0 494.0,315.0 501.0,320.6 506.7,327.0 516.5,323.4 525.0,319.0 530.6,312.0 536.0,301.0 543.0,291.0 549.0,285.5 556.0,291.0 564.4,294.0 580.0,292.5 590.8,267.0 597.8,256.6 606.0,246.7 612.0,236.9 619.0,229.8 631.6,228.4 640.0,224.0 648.4,218.6 659.7,213.0 669.5,208.7 679.4,205.9 685.0,210.0 691.0,219.0 699.4,233.0 705.0,237.9 713.4,238.6 720.5,244.0 729.0,251.0 736.0,255.5 744.4,257.6 750.0,261.0 755.6,269.5 759.8,275.9" fill="none" stroke="#ff8000" stroke-width="1"  shape-rendering="crispEdges"/><polyline points="80.5,514.2 87.5,512.1 94.5,510.1 101.5,508.3 108.5,506.2 115.5,502.9 122.5,500.2 129.5,494.9 136.5,487.9 143.5,480.7 150.5,475.9 157.5,468.7 164.5,463.7 171.5,457.0 178.5,451.3 185.5,447.0 192.5,441.6 199.5,436.3 206.5,431.7 213.5,429.0 220.5,426.6 227.5,423.6 234.5,420.2 241.5,418.6 248.5,418.7 255.5,419.0 262.5,419.8 269.5,418.9 276.5,418.1 283.5,417.8 290.5,416.5 297.5,417.0 304.5,417.3 311.5,417.8 318.5,419.0 325.5,418.9 332.5,417.0 339.5,415.3 346.5,413.8 353.5,411.7 360.5,410.0 367.5,409.6 374.5,408.5 381.5,407.5 388.5,405.8 395.5,402.1 402.5,395.8 409.5,392.0 416.5,387.8 423.5,383.7 430.5,379.2 437.5,374.5 444.5,368.4 451.5,361.8 458.5,354.4 465.5,346.9 472.5,340.9 479.5,335.3 486.5,330.5 493.5,323.8 500.5,317.2 507.5,312.2 514.5,307.3 521.5,302.5 528.5,296.3 535.5,289.9 542.5,285.0 549.5,280.1 556.5,276.5 563.5,272.7 570.5,269.5 577.5,265.5 584.5,261.8 591.5,257.8 598.5,254.0 605.5,251.3 612.5,247.2 619.5,242.2 626.5,237.4 633.5,233.0 640.5,227.2 647.5,220.5 654.5,215.1 661.5,210.6 668.5,205.4 675.5,201.4 682.5,198.0 689.5,196.1 696.5,193.6 703.5,191.3 710.5,188.3 717.5,186.6 724.5,186.7 731.5,187.9 738.5,189.0 745.5,190.0 752.5,193.3 759.5,197.8" fill="none" stroke="#00ffff" stroke-width="1"  shape-rendering="crispEdges"/><polyline points="80.5,523.2 87.5,521.1 94.5,519.1 101.5,517.3 108.5,515.2 115.5,511.9 122.5,509.2 129.5,503.9 136.5,496.9 143.5,489.7 150.5,484.9 157.5,477.7 164.5,472.7 171.5,466.0 178.5,460.3 185.5,456.0 192.5,450.6 199.5,445.3 206.5,440.7 213.5,438.0 220.5,435.6 227.5,432.6 234.5,429.2 241.5,427.6 248.5,427.7 255.5,428.0 262.5,428.8 269.5,427.9 276.5,427.1 283.5,426.8 290.5,425.5 297.5,426.0 304.5,426.3 311.5,426.8 318.5,428.0 325.5,427.9 332.5,426.0 339.5,424.3 346.5,422.8 353.5,420.7 360.5,419.0 367.5,418.6 374.5,417.5 381.5,416.5 388.5,414.8 395.5,411.1 402.5,404.8 409.5,401.0 416.5,396.8 423.5,392.7 430.5,388.2 437.5,383.5 444.5,377.4 451.5,370.8 458.5,363.4 465.5,355.9 472.5,349.9 479.5,344.3 486.5,339.5 493.5,332.8 500.5,326.2 507.5,321.2 514.5,316.3 521.5,311.5 528.5,305.3 535.5,298.9 542.5,294.0 549.5,289.1 556.5,285.5 563.5,281.7 570.5,278.5 577.5,274.5 584.5,270.8 591.5,266.8 598.5,263.0 605.5,260.3 612.5,256.2 619.5,251.2 626.5,246.4 633.5,242.0 640.5,236.2 647.5,229.5 654.5,224.1 661.5,219.6 668.5,214.4 675.5,210.4 682.5,207.0 689.5,205.1 696.5,202.6 703.5,200.3 710.5,197.3 717.5,195.6 724.5,195.7 731.5,196.9 738.5,198.0 745.5,199.0 752.5,202.3 759.5,206.8" fill="none" stroke="#00ffff" stroke-width="1"  shape-rendering="crispEdges"/><polyline points="80.5,518.7 87.5,516.6 94.5,514.6 101.5,512.8 108.5,510.7 115.5,507.4 122.5,504.7 129.5,499.4 136.5,492.4 143.5,485.2 150.5,480.4 157.5,473.2 164.5,468.2 171.5,461.5 178.5,455.8 185.5,451.5 192.5,446.1 199.5,440.8 206.5,436.2 213.5,433.5 220.5,431.1 227.5,428.1 234.5,424.7 241.5,423.1 248.5,423.2 255.5,423.5 262.5,424.3 269.5,423.4 276.5,422.6 283.5,422.3 290.5,421.0 297.5,421.5 304.5,421.8 311.5,422.3 318.5,423.5 325.5,423.4 332.5,421.5 339.5,419.8 346.5,418.3 353.5,416.2 360.5,414.5 367.5,414.1 374.5,413.0 381.5,412.0 388.5,410.3 395.5,406.6 402.5,400.3 409.5,396.5 416.5,392.3 423.5,388.2 430.5,383.7 437.5,379.0 444.5,372.9 451.5,366.3 458.5,358.9 465.5,351.4 472.5,345.4 479.5,339.8 486.5,335.0 493.5,328.3 500.5,321.7 507.5,316.7 514.5,311.8 521.5,307.0 528.5,300.8 535.5,294.4 542.5,289.5 549.5,284.6 556.5,281.0 563.5,277.2 570.5,274.0 577.5,270.0 584.5,266.3 591.5,262.3 598.5,258.5 605.5,255.8 612.5,251.7 619.5,246.7 626.5,241.9 633.5,237.5 640.5,231.7 647.5,225.0 654.5,219.6 661.5,215.1 668.5,209.9 675.5,205.9 682.5,202.5 689.5,200.6 696.5,198.1 703.5,195.8 710.5,192.8 717.5,191.1 724.5,191.2 731.5,192.4 738.5,193.5 745.5,194.5 752.5,197.8 759.5,202.3" fill="none" stroke="#e0e000" stroke-width="2" /><polyline points="80.5,518.7 87.5,516.6 94.5,514.6 101.5,512.8 108.5,510.7 115.5,507.4 122.5,504.7 129.5,499.4 136.5,492.4 143.5,485.2 150.5,480.4 157.5,473.2 164.5,468.2 171.5,461.5 178.5,455.8 185.5,451.5 192.5,446.1 199.5,440.8 206.5,436.2 213.5,433.5 220.5,431.1 227.5,428.1 234.5,424.7 241.5,423.1 248.5,423.2 255.5,423.5 262.5,424.3 269.5,423.4 276.5,422.6 283.5,422.3 290.5,421.0 297.5,421.5 304.5,421.8 311.5,422.3 318.5,423.5 325.5,423.4 332.5,421.5 339.5,419.8 346.5,418.3 353.5,416.2 360.5,414.5 367.5,414.1 374.5,413.0 381.5,412.0 388.5,410.3 395.5,406.6 402.5,400.3 409.5,396.5 416.5,392.3 423.5,388.2 430.5,383.7 437.5,379.0 444.5,372.9 451.5,366.3 458.5,358.9 465.5,351.4 472.5,345.4 479.5,339.8 486.5,335.0 493.5,328.3 500.5,321.7 507.5,316.7 514.5,311.8 521.5,307.0 528.5,300.8 535.5,294.4 542.5,289.5 549.5,284.6 556.5,281.0 563.5,277.2 570.5,274.0 577.5,270.0 584.5,266.3 591.5,262.3 598.5,258.5 605.5,255.8 612.5,251.7 619.5,246.7 626.5,241.9 633.5,237.5 640.5,231.7 647.5,225.0 654.5,219.6 661.5,215.1 668.5,209.9 675.5,205.9 682.5,202.5 689.5,200.6 696.5,198.1 703.5,195.8 710.5,192.8 717.5,191.1 724.5,191.2 731.5,192.4 738.5,193.5 745.5,194.5 752.5,197.8 759.5,202.3" fill="none" stroke="#008060" stroke-width="1"  shape-rendering="crispEdges"/><polyline points="80.5,505.8 80.8,505.3 86.4,494.0 92.1,482.8 97.7,465.9 103.3,453.3 107.5,446.9 113.2,443.4 120.2,441.3 127.2,438.5 134.3,433.6 141.3,431.5 148.3,432.2 153.9,427.9 159.6,423.0 165.2,416.7 170.8,413.2 176.4,410.4 182.1,408.3 187.7,407.5 193.3,408.3 198.9,409.7 204.6,411.1 208.8,414.6 213.0,422.3 217.2,430.0 220.0,432.9 224.3,430.0 228.5,423.7 232.7,416.7 236.9,411.1 241.1,408.3 246.8,411.8 250.0,415.2 255.6,422.9 262.7,432.1 268.3,425.8 273.9,420.8 282.3,419.8 292.2,418.4 303.4,419.0 311.9,418.0 317.5,416.6 323.1,414.5 328.8,403.3 334.4,394.8 340.0,390.6 345.6,388.5 351.3,392.0 356.9,400.4 362.5,404.7 368.1,404.0 373.8,394.8 379.4,386.4 385.0,385.0 390.6,385.7 396.3,382.2 401.9,366.7 404.1,356.6 412.5,344.7 420.9,341.8 429.4,336.2 436.4,329.2 443.4,317.9 449.1,306.7 456.1,295.4 461.7,285.6 465.9,278.6 470.2,273.6 474.4,271.5 480.0,272.2 487.0,275.0 494.1,277.2 501.1,282.8 506.7,286.3 512.3,283.5 519.4,280.0 525.0,277.9 530.6,271.5 536.3,260.3 541.9,250.4 548.9,245.5 550.0,248.3 558.4,252.5 566.9,253.2 572.5,250.4 578.1,244.0 585.2,231.4 592.2,217.3 599.2,206.1 606.3,197.6 613.3,192.0 618.9,188.5 625.9,187.8 634.4,183.6 641.4,179.3 648.4,175.1 654.1,173.7 658.3,176.5 663.9,175.1 669.5,168.1 675.2,165.3 678.3,164.2 682.5,165.6 688.1,172.6 693.8,181.1 699.4,188.1 705.0,190.9 713.4,193.0 720.5,200.8 726.1,207.8 731.7,213.4 738.8,216.2 744.4,219.0 750.0,223.3 755.6,228.9 759.8,234.5" fill="none" stroke="#ff00ff" stroke-width="1"  shape-rendering="crispEdges"/><polyline points="80.5,516.8 80.8,516.3 86.4,505.0 92.1,493.8 97.7,476.9 103.3,464.3 107.5,457.9 113.2,454.4 120.2,452.3 127.2,449.5 134.3,444.6 141.3,442.5 148.3,443.2 153.9,438.9 159.6,434.0 165.2,427.7 170.8,424.2 176.4,421.4 182.1,419.3 187.7,418.5 193.3,419.3 198.9,420.7 204.6,422.1 208.8,425.6 213.0,433.3 217.2,441.0 220.0,443.9 224.3,441.0 228.5,434.7 232.7,427.7 236.9,422.1 241.1,419.3 246.8,422.8 250.0,426.2 255.6,433.9 262.7,443.1 268.3,436.8 273.9,431.8 282.3,430.8 292.2,429.4 303.4,430.0 311.9,429.0 317.5,427.6 323.1,425.5 328.8,414.3 334.4,405.8 340.0,401.6 345.6,399.5 351.3,403.0 356.9,411.4 362.5,415.7 368.1,415.0 373.8,405.8 379.4,397.4 385.0,396.0 390.6,396.7 396.3,393.2 401.9,377.7 404.1,367.6 412.5,355.7 420.9,352.8 429.4,347.2 436.4,340.2 443.4,328.9 449.1,317.7 456.1,306.4 461.7,296.6 465.9,289.6 470.2,284.6 474.4,282.5 480.0,283.2 487.0,286.0 494.1,288.2 501.1,293.8 506.7,297.3 512.3,294.5 519.4,291.0 525.0,288.9 530.6,282.5 536.3,271.3 541.9,261.4 548.9,256.5 550.0,259.3 558.4,263.5 566.9,264.2 572.5,261.4 578.1,255.0 585.2,242.4 592.2,228.3 599.2,217.1 606.3,208.6 613.3,203.0 618.9,199.5 625.9,198.8 634.4,194.6 641.4,190.3 648.4,186.1 654.1,184.7 658.3,187.5 663.9,186.1 669.5,179.1 675.2,176.3 678.3,175.2 682.5,176.6 688.1,183.6 693.8,192.1 699.4,199.1 705.0,201.9 713.4,204.0 720.5,211.8 726.1,218.8 731.7,224.4 738.8,227.2 744.4,230.0 750.0,234.3 755.6,239.9 759.8,245.5" fill="none" stroke="#ff00ff" stroke-width="1"  shape-rendering="crispEdges"/><polyline points="80.5,511.2 80.8,510.8 86.4,499.5 92.1,488.3 97.7,471.4 103.3,458.8 107.5,452.4 113.2,448.9 120.2,446.8 127.2,444.0 134.3,439.1 141.3,437.0 148.3,437.7 153.9,433.4 159.6,428.5 165.2,422.2 170.8,418.7 176.4,415.9 182.1,413.8 187.7,413.0 193.3,413.8 198.9,415.2 204.6,416.6 208.8,420.1 213.0,427.8 217.2,435.5 220.0,438.4 224.3,435.5 228.5,429.2 232.7,422.2 236.9,416.6 241.1,413.8 246.8,417.3 250.0,420.7 255.6,428.4 262.7,437.6 268.3,431.3 273.9,426.3 282.3,425.3 292.2,423.9 303.4,424.5 311.9,423.5 317.5,422.1 323.1,420.0 328.8,408.8 334.4,400.3 340.0,396.1 345.6,394.0 351.3,397.5 356.9,405.9 362.5,410.2 368.1,409.5 373.8,400.3 379.4,391.9 385.0,390.5 390.6,391.2 396.3,387.7 401.9,372.2 404.1,362.1 412.5,350.2 420.9,347.3 429.4,341.7 436.4,334.7 443.4,323.4 449.1,312.2 456.1,300.9 461.7,291.1 465.9,284.1 470.2,279.1 474.4,277.0 480.0,277.7 487.0,280.5 494.1,282.7 501.1,288.3 506.7,291.8 512.3,289.0 519.4,285.5 525.0,283.4 530.6,277.0 536.3,265.8 541.9,255.9 548.9,251.0 550.0,253.8 558.4,258.0 566.9,258.7 572.5,255.9 578.1,249.5 585.2,236.9 592.2,222.8 599.2,211.6 606.3,203.1 613.3,197.5 618.9,194.0 625.9,193.3 634.4,189.1 641.4,184.8 648.4,180.6 654.1,179.2 658.3,182.0 663.9,180.6 669.5,173.6 675.2,170.8 678.3,169.7 682.5,171.1 688.1,178.1 693.8,186.6 699.4,193.6 705.0,196.4 713.4,198.5 720.5,206.3 726.1,213.3 731.7,218.9 738.8,221.7 744.4,224.5 750.0,228.8 755.6,234.4 759.8,240.0" fill="none" stroke="#00e000" stroke-width="1"  shape-rendering="crispEdges"/><polyline points="80.5,404.9 103.0,400.0 128.0,392.0 153.0,384.0 188.0,370.0 218.0,361.0 253.0,354.0 295.0,347.5 340.0,340.0 383.0,331.0 415.0,316.0 452.0,295.0 490.0,275.0 520.0,260.0 550.0,242.0 575.0,230.5 606.0,208.7 634.0,190.5 662.5,173.6 685.0,160.0 704.7,154.0 728.6,148.3 760.0,146.0" fill="none" stroke="#ff0000" stroke-width="1"  shape-rendering="crispEdges"/><polyline points="80.5,461.0 95.5,450.0 115.5,422.5 128.0,407.5 143.0,400.0 160.5,386.0 173.0,376.0 185.5,370.0 198.0,374.0 208.0,379.0 223.0,386.0 238.0,390.0 250.0,390.0 271.0,386.0 292.0,385.5 306.0,386.0 317.5,389.0 326.0,389.0 331.5,379.0 340.0,375.0 351.0,374.0 358.0,376.4 369.5,375.7 379.4,370.8 390.6,365.9 396.0,363.0 404.7,351.0 408.0,341.7 425.0,327.7 436.4,315.0 446.0,295.0 454.7,278.4 466.0,258.7 477.0,241.9 485.6,234.8 492.7,229.0 501.0,232.7 511.0,237.0 522.0,238.4 530.6,239.8 539.0,233.4 547.5,227.8 556.0,225.7 564.0,227.0 575.0,229.8 583.7,225.6 592.0,214.4 606.0,193.0 617.5,173.6 628.7,161.0 640.0,154.0 654.0,149.0 662.5,147.6 671.0,141.0 682.0,135.0 690.6,135.0 699.0,139.0 707.5,146.9 716.0,151.5 730.0,152.0 745.0,148.7 760.0,146.0" fill="none" stroke="#800000" stroke-width="1"  shape-rendering="crispEdges"/><polyline points="80.5,509.2 98.0,503.7 123.0,495.0 148.0,486.0 178.0,476.0 198.0,470.0 218.0,466.0 238.0,461.0 258.0,458.7 278.0,455.0 303.0,451.0 323.0,447.5 343.0,442.5 363.0,438.7 383.0,433.7 398.0,430.0 405.0,427.5 422.5,418.7 440.0,410.0 460.0,397.5 475.0,388.7 490.0,381.0 502.5,375.0 515.0,370.0 530.0,362.5 545.0,355.0 565.0,345.0 580.0,337.5 590.0,330.0 605.0,320.0 620.0,310.0 635.0,300.0 650.0,292.0 660.0,286.5 674.0,277.3 688.0,269.8 702.0,265.3 716.0,262.5 730.0,260.4 744.0,258.3 757.0,257.2" fill="none" stroke="#000" stroke-width="2.7" /><polyline points="80.5,576.3 90.5,577.5 100.5,583.7 113.0,591.0 123.0,593.7 130.5,592.5 138.0,582.5 145.5,570.0 155.5,560.0 165.5,550.0 178.0,537.5 188.0,527.5 198.0,505.0 208.0,490.0 218.0,475.0 228.0,462.5 233.0,458.7 250.0,461.5 264.0,460.8 278.0,459.4 292.0,458.0 306.0,457.3 320.0,458.0 334.4,462.0 347.0,464.3 354.0,458.0 361.0,453.0 369.5,452.4 379.4,454.5 390.6,452.4 402.0,449.5 409.0,451.6 416.0,454.5 423.0,451.0 430.0,451.0 450.0,447.5 457.5,442.5 472.5,445.0 485.0,438.7 492.5,430.0 502.5,405.0 515.0,385.0 525.0,367.5 535.0,355.0 545.0,351.0 557.5,340.0 565.0,325.0 575.0,315.0 587.5,310.0 600.0,312.5 610.0,317.5 620.0,321.0 630.0,315.0 642.5,305.0 655.0,290.0 660.0,283.6 671.0,275.0 688.0,269.5 696.6,258.0 706.4,242.8 716.0,230.0 722.0,229.5 730.0,233.0 738.7,238.6 745.8,240.7 751.4,247.0 757.0,254.0" fill="none" stroke="#000" stroke-width="1"  shape-rendering="crispEdges"/><g shape-rendering="crispEdges"><rect x="80" y="505.0" width="1" height="9.0" fill="#000"/><rect x="78.0" y="507" width="5" height="4" fill="#000"/><rect x="87" y="476.3" width="1" height="19.0" fill="#000"/><rect x="85.5" y="478.5" width="4" height="15" fill="#fff" stroke="#000" stroke-width="1"/><rect x="94" y="461.3" width="1" height="13.2" fill="#000"/><rect x="92.5" y="465.5" width="4" height="2" fill="#fff" stroke="#000" stroke-width="1"/><rect x="101" y="431.3" width="1" height="31.6" fill="#00f"/><rect x="99.5" y="432.5" width="4" height="29" fill="#fff" stroke="#00f" stroke-width="1"/><rect x="108" y="421.5" width="1" height="15.5" fill="#00f"/><rect x="106.5" y="423.5" width="4" height="13" fill="#fff" stroke="#00f" stroke-width="1"/><rect x="115" y="418.0" width="1" height="25.3" fill="#00f"/><rect x="113.0" y="421" width="5" height="16" fill="#00f"/><rect x="122" y="437.0" width="1" height="15.0" fill="#00f"/><rect x="120.0" y="440" width="5" height="2" fill="#00f"/><rect x="129" y="433.2" width="1" height="20.7" fill="#00f"/><rect x="127.5" y="435.5" width="4" height="11" fill="#fff" stroke="#00f" stroke-width="1"/><rect x="136" y="431.3" width="1" height="20.4" fill="#00f"/><rect x="134.5" y="432.5" width="4" height="12" fill="#fff" stroke="#00f" stroke-width="1"/><rect x="143" y="422.9" width="1" height="12.0" fill="#00f"/><rect x="141.0" y="431" width="5" height="2" fill="#00f"/><rect x="150" y="416.8" width="1" height="27.1" fill="#00f"/><rect x="148.0" y="425" width="5" height="17" fill="#00f"/><rect x="157" y="408.1" width="1" height="30.7" fill="#00f"/><rect x="155.5" y="411.5" width="4" height="26" fill="#fff" stroke="#00f" stroke-width="1"/><rect x="164" y="401.1" width="1" height="27.4" fill="#00f"/><rect x="162.0" y="414" width="5" height="2" fill="#00f"/><rect x="171" y="407.4" width="1" height="15.9" fill="#00f"/><rect x="169.5" y="408.5" width="4" height="7" fill="#fff" stroke="#00f" stroke-width="1"/><rect x="178" y="398.0" width="1" height="15.5" fill="#00f"/><rect x="176.0" y="401" width="5" height="5" fill="#00f"/><rect x="185" y="401.1" width="1" height="15.8" fill="#00f"/><rect x="183.5" y="406.5" width="4" height="8" fill="#fff" stroke="#00f" stroke-width="1"/><rect x="192" y="409.3" width="1" height="19.7" fill="#00f"/><rect x="190.0" y="420" width="5" height="2" fill="#00f"/><rect x="199" y="415.2" width="1" height="13.8" fill="#00f"/><rect x="197.0" y="418" width="5" height="2" fill="#00f"/><rect x="206" y="413.0" width="1" height="13.6" fill="#00f"/><rect x="204.5" y="416.5" width="4" height="2" fill="#fff" stroke="#00f" stroke-width="1"/><rect x="213" y="421.6" width="1" height="32.9" fill="#00f"/><rect x="211.0" y="422" width="5" height="31" fill="#00f"/><rect x="220" y="443.0" width="1" height="21.8" fill="#00f"/><rect x="218.0" y="444" width="5" height="19" fill="#00f"/><rect x="227" y="414.9" width="1" height="37.5" fill="#00f"/><rect x="225.5" y="417.5" width="4" height="33" fill="#fff" stroke="#00f" stroke-width="1"/><rect x="234" y="396.9" width="1" height="23.9" fill="#00f"/><rect x="232.5" y="398.5" width="4" height="21" fill="#fff" stroke="#00f" stroke-width="1"/><rect x="241" y="388.2" width="1" height="12.9" fill="#00f"/><rect x="239.0" y="398" width="5" height="2" fill="#00f"/><rect x="248" y="400.8" width="1" height="41.8" fill="#00f"/><rect x="246.0" y="401" width="5" height="25" fill="#00f"/><rect x="255" y="409.5" width="1" height="33.0" fill="#00f"/><rect x="253.0" y="424" width="5" height="19" fill="#00f"/><rect x="262" y="446.7" width="1" height="18.3" fill="#000"/><rect x="260.0" y="447" width="5" height="12" fill="#000"/><rect x="269" y="410.2" width="1" height="36.3" fill="#00f"/><rect x="267.5" y="416.5" width="4" height="28" fill="#fff" stroke="#00f" stroke-width="1"/><rect x="276" y="413.3" width="1" height="9.6" fill="#00f"/><rect x="274.0" y="415" width="5" height="2" fill="#00f"/><rect x="283" y="420.0" width="1" height="7.0" fill="#00f"/><rect x="281.0" y="423" width="5" height="4" fill="#00f"/><rect x="290" y="405.9" width="1" height="30.2" fill="#00f"/><rect x="288.0" y="412" width="5" height="4" fill="#00f"/><rect x="297" y="417.9" width="1" height="13.6" fill="#00f"/><rect x="295.0" y="419" width="5" height="2" fill="#00f"/><rect x="304" y="412.3" width="1" height="23.9" fill="#00f"/><rect x="302.0" y="415" width="5" height="9" fill="#00f"/><rect x="311" y="414.1" width="1" height="16.5" fill="#000"/><rect x="309.5" y="416.5" width="4" height="5" fill="#fff" stroke="#000" stroke-width="1"/><rect x="318" y="417.5" width="1" height="15.2" fill="#000"/><rect x="316.0" y="421" width="5" height="11" fill="#000"/><rect x="325" y="400.3" width="1" height="28.1" fill="#000"/><rect x="323.5" y="404.5" width="4" height="19" fill="#fff" stroke="#000" stroke-width="1"/><rect x="332" y="379.2" width="1" height="27.4" fill="#000"/><rect x="330.5" y="381.5" width="4" height="22" fill="#fff" stroke="#000" stroke-width="1"/><rect x="339" y="373.3" width="1" height="17.2" fill="#000"/><rect x="337.0" y="378" width="5" height="8" fill="#000"/><rect x="346" y="375.0" width="1" height="16.2" fill="#000"/><rect x="344.5" y="384.5" width="4" height="2" fill="#fff" stroke="#000" stroke-width="1"/><rect x="353" y="388.4" width="1" height="23.9" fill="#000"/><rect x="351.0" y="393" width="5" height="19" fill="#000"/><rect x="360" y="417.9" width="1" height="16.9" fill="#000"/><rect x="358.0" y="418" width="5" height="10" fill="#000"/><rect x="367" y="400.3" width="1" height="19.0" fill="#000"/><rect x="365.0" y="405" width="5" height="4" fill="#000"/><rect x="374" y="373.6" width="1" height="33.0" fill="#000"/><rect x="372.5" y="378.5" width="4" height="27" fill="#fff" stroke="#000" stroke-width="1"/><rect x="381" y="363.0" width="1" height="21.8" fill="#000"/><rect x="379.0" y="365" width="5" height="13" fill="#000"/><rect x="388" y="383.4" width="1" height="15.2" fill="#000"/><rect x="386.0" y="386" width="5" height="7" fill="#000"/><rect x="395" y="362.3" width="1" height="33.0" fill="#000"/><rect x="393.5" y="368.5" width="4" height="21" fill="#fff" stroke="#000" stroke-width="1"/><rect x="402" y="329.1" width="1" height="29.5" fill="#00f"/><rect x="400.5" y="334.5" width="4" height="22" fill="#fff" stroke="#00f" stroke-width="1"/><rect x="409" y="324.1" width="1" height="18.3" fill="#00f"/><rect x="407.0" y="333" width="5" height="6" fill="#00f"/><rect x="416" y="329.8" width="1" height="14.8" fill="#00f"/><rect x="414.5" y="333.5" width="4" height="7" fill="#fff" stroke="#00f" stroke-width="1"/><rect x="423" y="324.1" width="1" height="19.0" fill="#00f"/><rect x="421.0" y="332" width="5" height="11" fill="#00f"/><rect x="430" y="325.1" width="1" height="20.8" fill="#00f"/><rect x="428.5" y="327.5" width="4" height="13" fill="#fff" stroke="#00f" stroke-width="1"/><rect x="437" y="310.8" width="1" height="16.6" fill="#00f"/><rect x="435.0" y="321" width="5" height="4" fill="#00f"/><rect x="444" y="301.6" width="1" height="18.7" fill="#00f"/><rect x="442.5" y="302.5" width="4" height="17" fill="#fff" stroke="#00f" stroke-width="1"/><rect x="451" y="281.3" width="1" height="14.1" fill="#00f"/><rect x="449.5" y="285.5" width="4" height="9" fill="#fff" stroke="#00f" stroke-width="1"/><rect x="458" y="272.1" width="1" height="29.5" fill="#00f"/><rect x="456.5" y="283.5" width="4" height="2" fill="#fff" stroke="#00f" stroke-width="1"/><rect x="465" y="245.0" width="1" height="42.6" fill="#00f"/><rect x="463.5" y="253.5" width="4" height="33" fill="#fff" stroke="#00f" stroke-width="1"/><rect x="472" y="239.8" width="1" height="23.2" fill="#00f"/><rect x="470.0" y="244" width="5" height="19" fill="#00f"/><rect x="479" y="266.9" width="1" height="18.8" fill="#00f"/><rect x="477.0" y="269" width="5" height="6" fill="#00f"/><rect x="486" y="274.5" width="1" height="15.5" fill="#00f"/><rect x="484.0" y="279" width="5" height="9" fill="#00f"/><rect x="493" y="276.8" width="1" height="17.9" fill="#00f"/><rect x="491.5" y="278.5" width="4" height="13" fill="#fff" stroke="#00f" stroke-width="1"/><rect x="500" y="285.8" width="1" height="13.8" fill="#00f"/><rect x="498.0" y="293" width="5" height="3" fill="#00f"/><rect x="507" y="289.0" width="1" height="20.7" fill="#00f"/><rect x="505.0" y="298" width="5" height="10" fill="#00f"/><rect x="514" y="275.9" width="1" height="27.8" fill="#00f"/><rect x="512.5" y="280.5" width="4" height="22" fill="#fff" stroke="#00f" stroke-width="1"/><rect x="521" y="272.8" width="1" height="16.9" fill="#00f"/><rect x="519.5" y="281.5" width="4" height="4" fill="#fff" stroke="#00f" stroke-width="1"/><rect x="528" y="267.9" width="1" height="14.8" fill="#00f"/><rect x="526.5" y="269.5" width="4" height="12" fill="#fff" stroke="#00f" stroke-width="1"/><rect x="535" y="234.1" width="1" height="22.5" fill="#00f"/><rect x="533.5" y="239.5" width="4" height="15" fill="#fff" stroke="#00f" stroke-width="1"/><rect x="542" y="234.8" width="1" height="7.7" fill="#00f"/><rect x="540.5" y="236.5" width="4" height="2" fill="#fff" stroke="#00f" stroke-width="1"/><rect x="549" y="237.0" width="1" height="9.8" fill="#00f"/><rect x="547.5" y="242.5" width="4" height="2" fill="#fff" stroke="#00f" stroke-width="1"/><rect x="556" y="254.5" width="1" height="21.1" fill="#00f"/><rect x="554.0" y="255" width="5" height="7" fill="#00f"/><rect x="563" y="244.0" width="1" height="24.6" fill="#00f"/><rect x="561.0" y="266" width="5" height="2" fill="#00f"/><rect x="570" y="260.8" width="1" height="14.1" fill="#00f"/><rect x="568.5" y="262.5" width="4" height="9" fill="#fff" stroke="#00f" stroke-width="1"/><rect x="577" y="243.2" width="1" height="19.0" fill="#00f"/><rect x="575.5" y="245.5" width="4" height="13" fill="#fff" stroke="#00f" stroke-width="1"/><rect x="584" y="217.2" width="1" height="14.8" fill="#00f"/><rect x="582.5" y="227.5" width="4" height="2" fill="#fff" stroke="#00f" stroke-width="1"/><rect x="591" y="201.0" width="1" height="16.2" fill="#00f"/><rect x="589.5" y="206.5" width="4" height="9" fill="#fff" stroke="#00f" stroke-width="1"/><rect x="598" y="195.0" width="1" height="15.9" fill="#00f"/><rect x="596.0" y="203" width="5" height="6" fill="#00f"/><rect x="605" y="191.9" width="1" height="16.2" fill="#00f"/><rect x="603.5" y="198.5" width="4" height="8" fill="#fff" stroke="#00f" stroke-width="1"/><rect x="612" y="176.1" width="1" height="27.0" fill="#00f"/><rect x="610.5" y="180.5" width="4" height="18" fill="#fff" stroke="#00f" stroke-width="1"/><rect x="619" y="166.3" width="1" height="11.5" fill="#00f"/><rect x="617.0" y="174" width="5" height="2" fill="#00f"/><rect x="626" y="173.9" width="1" height="21.1" fill="#00f"/><rect x="624.0" y="180" width="5" height="12" fill="#00f"/><rect x="633" y="179.9" width="1" height="11.3" fill="#00f"/><rect x="631.0" y="182" width="5" height="9" fill="#00f"/><rect x="640" y="175.0" width="1" height="12.0" fill="#00f"/><rect x="638.5" y="180.5" width="4" height="5" fill="#fff" stroke="#00f" stroke-width="1"/><rect x="647" y="165.2" width="1" height="15.8" fill="#00f"/><rect x="645.5" y="173.5" width="4" height="6" fill="#fff" stroke="#00f" stroke-width="1"/><rect x="654" y="164.0" width="1" height="19.7" fill="#00f"/><rect x="652.5" y="173.5" width="4" height="4" fill="#fff" stroke="#00f" stroke-width="1"/><rect x="661" y="150.0" width="1" height="45.0" fill="#00f"/><rect x="659.0" y="155" width="5" height="35" fill="#00f"/><rect x="668" y="160.2" width="1" height="14.8" fill="#00f"/><rect x="666.5" y="164.5" width="4" height="10" fill="#fff" stroke="#00f" stroke-width="1"/><rect x="675" y="157.8" width="1" height="10.8" fill="#00f"/><rect x="673.5" y="161.5" width="4" height="2" fill="#fff" stroke="#00f" stroke-width="1"/><rect x="682" y="163.0" width="1" height="9.8" fill="#00f"/><rect x="680.0" y="166" width="5" height="2" fill="#00f"/><rect x="689" y="182.0" width="1" height="25.6" fill="#00f"/><rect x="687.0" y="182" width="5" height="22" fill="#00f"/><rect x="696" y="200.0" width="1" height="18.8" fill="#00f"/><rect x="694.5" y="210.5" width="4" height="4" fill="#fff" stroke="#00f" stroke-width="1"/><rect x="703" y="187.9" width="1" height="37.0" fill="#00f"/><rect x="701.0" y="203" width="5" height="21" fill="#00f"/><rect x="710" y="200.0" width="1" height="17.9" fill="#00f"/><rect x="708.5" y="200.5" width="4" height="15" fill="#fff" stroke="#00f" stroke-width="1"/><rect x="717" y="209.0" width="1" height="20.8" fill="#00f"/><rect x="715.0" y="210" width="5" height="3" fill="#00f"/><rect x="724" y="208.8" width="1" height="23.9" fill="#00f"/><rect x="722.0" y="210" width="5" height="20" fill="#00f"/><rect x="731" y="195.3" width="1" height="39.1" fill="#00f"/><rect x="729.0" y="218" width="5" height="11" fill="#00f"/><rect x="738" y="224.5" width="1" height="16.9" fill="#000"/><rect x="736.5" y="232.5" width="4" height="6" fill="#fff" stroke="#000" stroke-width="1"/><rect x="745" y="216.1" width="1" height="20.0" fill="#000"/><rect x="743.5" y="218.5" width="4" height="15" fill="#fff" stroke="#000" stroke-width="1"/><rect x="752" y="223.1" width="1" height="23.9" fill="#f00"/><rect x="750.0" y="223" width="5" height="24" fill="#f00"/><rect x="759" y="239.3" width="1" height="26.7" fill="#f00"/><rect x="757.0" y="248" width="5" height="18" fill="#f00"/></g><text x="801" y="143" font-size="14" font-weight="bold" text-anchor="start" fill="#000" stroke="#fff" stroke-width=".15" textLength="28.0" lengthAdjust="spacingAndGlyphs" >4608</text><rect x="787" y="151" width="57" height="1" fill="#f00"/><text x="801" y="301" font-size="14" font-weight="bold" text-anchor="start" fill="#000" stroke="#fff" stroke-width=".15" textLength="28.0" lengthAdjust="spacingAndGlyphs" >4329</text><rect x="787" y="309" width="57" height="1" fill="#f00"/><text x="801" y="460" font-size="14" font-weight="bold" text-anchor="start" fill="#000" stroke="#fff" stroke-width=".15" textLength="28.0" lengthAdjust="spacingAndGlyphs" >4049</text><rect x="787" y="465" width="57" height="1" fill="#f00"/><text x="801" y="674" font-size="14" font-weight="bold" text-anchor="start" fill="#000" stroke="#fff" stroke-width=".15" textLength="28.0" lengthAdjust="spacingAndGlyphs" >3665</text><rect x="787" y="683" width="57" height="1" fill="#f00"/><text x="262" y="255" font-size="14" font-weight="bold" text-anchor="start" fill="#000" stroke="#fff" stroke-width=".15" textLength="118.0" lengthAdjust="spacingAndGlyphs" >Breakout Structure</text><text x="214" y="621" font-size="14" font-weight="bold" text-anchor="start" fill="#000" stroke="#fff" stroke-width=".15" textLength="47.5" lengthAdjust="spacingAndGlyphs" >Small T</text><text x="213" y="637" font-size="14" font-weight="bold" text-anchor="start" fill="#000" stroke="#fff" stroke-width=".15" textLength="64.5" lengthAdjust="spacingAndGlyphs" >collapsing</text><text x="178" y="748" font-size="14" font-weight="bold" text-anchor="start" fill="#000" stroke="#fff" stroke-width=".15" textLength="79.0" lengthAdjust="spacingAndGlyphs" >DB Structure</text><text x="494" y="597" font-size="14" font-weight="bold" text-anchor="start" fill="#000" stroke="#fff" stroke-width=".15" textLength="47.5" lengthAdjust="spacingAndGlyphs" >Small T</text><text x="767" y="212" font-size="14" font-weight="bold" text-anchor="start" fill="#000" stroke="#fff" stroke-width=".15" textLength="109.5" lengthAdjust="spacingAndGlyphs" >S/T SELL SIGNAL</text><text x="913" y="133" font-size="14" font-weight="bold" text-anchor="start" fill="#000" stroke="#fff" stroke-width=".15" textLength="169.5" lengthAdjust="spacingAndGlyphs" >Next Echo and Pulse Highs</text><text x="913" y="181" font-size="14" font-weight="bold" text-anchor="start" fill="#000" stroke="#fff" stroke-width=".15" textLength="128.4" lengthAdjust="spacingAndGlyphs" >* S/T SELL SIGNAL *</text><text x="913" y="197" font-size="14" font-weight="bold" text-anchor="start" fill="#000" stroke="#fff" stroke-width=".15" textLength="108.4" lengthAdjust="spacingAndGlyphs" >* SHORT ALERT *</text><text x="913" y="229" font-size="14" font-weight="bold" text-anchor="start" fill="#000" stroke="#fff" stroke-width=".15" textLength="216.0" lengthAdjust="spacingAndGlyphs" >S/T SELL Signal at 4456 on 15 Aug</text><text x="913" y="261" font-size="14" font-weight="bold" text-anchor="start" fill="#000" stroke="#fff" stroke-width=".15" textLength="215.0" lengthAdjust="spacingAndGlyphs" >T volume Osc: negative on 02 Aug</text><text x="913" y="277" font-size="14" font-weight="bold" text-anchor="start" fill="#000" stroke="#fff" stroke-width=".15" textLength="35.0" lengthAdjust="spacingAndGlyphs" >Down</text><text x="913" y="309" font-size="14" font-weight="bold" text-anchor="start" fill="#000" stroke="#fff" stroke-width=".15" textLength="175.0" lengthAdjust="spacingAndGlyphs" >Osc: SELL Signal on 01 Aug</text><text x="913" y="325" font-size="14" font-weight="bold" text-anchor="start" fill="#000" stroke="#fff" stroke-width=".15" textLength="35.0" lengthAdjust="spacingAndGlyphs" >Down</text><text x="913" y="405" font-size="14" font-weight="bold" text-anchor="start" fill="#000" stroke="#fff" stroke-width=".15" textLength="84.6" lengthAdjust="spacingAndGlyphs" >Click here for</text><text x="913" y="421" font-size="14" font-weight="bold" text-anchor="start" fill="#000" stroke="#fff" stroke-width=".15" textLength="119.6" lengthAdjust="spacingAndGlyphs" >More Information...</text><text x="913" y="709" font-size="14" font-weight="bold" text-anchor="start" fill="#000" stroke="#fff" stroke-width=".15" textLength="139.0" lengthAdjust="spacingAndGlyphs" >Next Projected Low(s)</text></g><g clip-path="url(#oc)"><g shape-rendering="crispEdges"><rect x="80" y="889.0" width="1" height="25.5" fill="#0000ff"/><rect x="87" y="889.0" width="1" height="19.5" fill="#0000ff"/><rect x="94" y="889.0" width="1" height="5.5" fill="#0000ff"/><rect x="101" y="872.5" width="1" height="17.5" fill="#0000ff"/><rect x="108" y="855.0" width="1" height="35.0" fill="#0000ff"/><rect x="115" y="834.0" width="1" height="56.0" fill="#0000ff"/><rect x="122" y="822.5" width="1" height="67.5" fill="#0000ff"/><rect x="129" y="816.0" width="1" height="74.0" fill="#0000ff"/><rect x="136" y="815.0" width="1" height="75.0" fill="#0000ff"/><rect x="143" y="815.0" width="1" height="75.0" fill="#0000ff"/><rect x="150" y="816.5" width="1" height="73.5" fill="#0000ff"/><rect x="157" y="814.0" width="1" height="76.0" fill="#0000ff"/><rect x="164" y="810.0" width="1" height="80.0" fill="#0000ff"/><rect x="171" y="806.0" width="1" height="84.0" fill="#0000ff"/><rect x="178" y="803.5" width="1" height="86.5" fill="#0000ff"/><rect x="185" y="802.0" width="1" height="88.0" fill="#0000ff"/><rect x="192" y="805.0" width="1" height="85.0" fill="#0000ff"/><rect x="199" y="810.0" width="1" height="80.0" fill="#0000ff"/><rect x="206" y="812.5" width="1" height="77.5" fill="#0000ff"/><rect x="213" y="822.5" width="1" height="67.5" fill="#0000ff"/><rect x="220" y="834.0" width="1" height="56.0" fill="#0000ff"/><rect x="227" y="840.0" width="1" height="50.0" fill="#0000ff"/><rect x="234" y="841.0" width="1" height="49.0" fill="#0000ff"/><rect x="241" y="840.0" width="1" height="50.0" fill="#0000ff"/><rect x="248" y="841.5" width="1" height="48.5" fill="#0000ff"/><rect x="255" y="839.0" width="1" height="51.0" fill="#0000ff"/><rect x="262" y="847.5" width="1" height="42.5" fill="#0000ff"/><rect x="269" y="858.5" width="1" height="31.5" fill="#0000ff"/><rect x="276" y="868.5" width="1" height="21.5" fill="#0000ff"/><rect x="283" y="873.5" width="1" height="16.5" fill="#0000ff"/><rect x="290" y="873.5" width="1" height="16.5" fill="#0000ff"/><rect x="297" y="869.0" width="1" height="21.0" fill="#0000ff"/><rect x="304" y="871.0" width="1" height="19.0" fill="#0000ff"/><rect x="311" y="876.5" width="1" height="13.5" fill="#0000ff"/><rect x="318" y="880.0" width="1" height="10.0" fill="#0000ff"/><rect x="325" y="881.5" width="1" height="8.5" fill="#0000ff"/><rect x="332" y="876.0" width="1" height="14.0" fill="#0000ff"/><rect x="339" y="868.5" width="1" height="21.5" fill="#0000ff"/><rect x="346" y="860.5" width="1" height="29.5" fill="#0000ff"/><rect x="353" y="856.0" width="1" height="34.0" fill="#0000ff"/><rect x="360" y="859.0" width="1" height="31.0" fill="#0000ff"/><rect x="367" y="865.0" width="1" height="25.0" fill="#0000ff"/><rect x="374" y="868.5" width="1" height="21.5" fill="#0000ff"/><rect x="381" y="868.0" width="1" height="22.0" fill="#0000ff"/><rect x="388" y="867.0" width="1" height="23.0" fill="#0000ff"/><rect x="395" y="857.0" width="1" height="33.0" fill="#0000ff"/><rect x="402" y="843.5" width="1" height="46.5" fill="#0000ff"/><rect x="409" y="831.5" width="1" height="58.5" fill="#0000ff"/><rect x="416" y="826.0" width="1" height="64.0" fill="#0000ff"/><rect x="423" y="814.0" width="1" height="76.0" fill="#0000ff"/><rect x="430" y="805.0" width="1" height="85.0" fill="#0000ff"/><rect x="437" y="802.5" width="1" height="87.5" fill="#0000ff"/><rect x="444" y="801.0" width="1" height="89.0" fill="#0000ff"/><rect x="451" y="794.0" width="1" height="96.0" fill="#0000ff"/><rect x="458" y="787.5" width="1" height="102.5" fill="#0000ff"/><rect x="465" y="776.0" width="1" height="114.0" fill="#0000ff"/><rect x="472" y="766.0" width="1" height="124.0" fill="#0000ff"/><rect x="479" y="762.0" width="1" height="128.0" fill="#0000ff"/><rect x="486" y="764.0" width="1" height="126.0" fill="#0000ff"/><rect x="493" y="769.0" width="1" height="121.0" fill="#0000ff"/><rect x="500" y="782.5" width="1" height="107.5" fill="#0000ff"/><rect x="507" y="797.5" width="1" height="92.5" fill="#0000ff"/><rect x="514" y="806.0" width="1" height="84.0" fill="#0000ff"/><rect x="521" y="811.5" width="1" height="78.5" fill="#0000ff"/><rect x="528" y="810.0" width="1" height="80.0" fill="#0000ff"/><rect x="535" y="807.5" width="1" height="82.5" fill="#0000ff"/><rect x="542" y="800.0" width="1" height="90.0" fill="#0000ff"/><rect x="549" y="794.0" width="1" height="96.0" fill="#0000ff"/><rect x="556" y="795.0" width="1" height="95.0" fill="#0000ff"/><rect x="563" y="796.5" width="1" height="93.5" fill="#0000ff"/><rect x="570" y="807.5" width="1" height="82.5" fill="#0000ff"/><rect x="577" y="816.0" width="1" height="74.0" fill="#0000ff"/><rect x="584" y="818.5" width="1" height="71.5" fill="#0000ff"/><rect x="591" y="811.5" width="1" height="78.5" fill="#0000ff"/><rect x="598" y="802.5" width="1" height="87.5" fill="#0000ff"/><rect x="605" y="795.0" width="1" height="95.0" fill="#0000ff"/><rect x="612" y="787.5" width="1" height="102.5" fill="#0000ff"/><rect x="619" y="781.5" width="1" height="108.5" fill="#0000ff"/><rect x="626" y="782.5" width="1" height="107.5" fill="#0000ff"/><rect x="633" y="784.0" width="1" height="106.0" fill="#0000ff"/><rect x="640" y="786.5" width="1" height="103.5" fill="#0000ff"/><rect x="647" y="790.0" width="1" height="100.0" fill="#0000ff"/><rect x="654" y="795.0" width="1" height="95.0" fill="#0000ff"/><rect x="661" y="799.0" width="1" height="91.0" fill="#0000ff"/><rect x="668" y="800.0" width="1" height="90.0" fill="#0000ff"/><rect x="675" y="801.0" width="1" height="89.0" fill="#0000ff"/><rect x="682" y="806.0" width="1" height="84.0" fill="#0000ff"/><rect x="689" y="816.0" width="1" height="74.0" fill="#0000ff"/><rect x="696" y="827.5" width="1" height="62.5" fill="#0000ff"/><rect x="703" y="840.0" width="1" height="50.0" fill="#0000ff"/><rect x="710" y="854.0" width="1" height="36.0" fill="#0000ff"/><rect x="717" y="867.5" width="1" height="22.5" fill="#0000ff"/><rect x="724" y="876.5" width="1" height="13.5" fill="#0000ff"/><rect x="731" y="881.5" width="1" height="8.5" fill="#0000ff"/><rect x="738" y="888.5" width="1" height="1.5" fill="#0000ff"/><rect x="745" y="889.0" width="1" height="9.5" fill="#0000ff"/><rect x="752" y="889.0" width="1" height="16.0" fill="#0000ff"/><rect x="759" y="889.0" width="1" height="24.5" fill="#0000ff"/></g><polyline points="80.5,813.5 95.0,813.5 102.5,817.5 112.5,820.0 150.0,819.0 180.0,817.5 190.0,815.0 215.0,815.0 235.0,819.0 260.0,822.5 280.0,827.5 300.0,834.0 320.0,840.0 340.0,845.0 360.0,847.5 380.0,850.0 400.0,851.0 415.0,849.0 435.0,845.0 450.0,840.0 465.0,832.5 480.0,826.0 495.0,820.0 515.0,816.5 540.0,816.0 565.0,812.5 600.0,812.5 620.0,808.5 640.0,805.0 660.0,803.0 685.0,803.5 700.0,806.5 715.0,811.0 730.0,818.5 739.0,823.0 760.0,823.0" fill="none" stroke="#000" stroke-width="1"  shape-rendering="crispEdges"/><path d="M213.0 756.0V794.0M203.5 775.0L213.0 794.0L222.5 775.0" stroke="#ff0000" stroke-width="1.5" fill="none"/><path d="M577.5 756.0V791.0M568.0 772.0L577.5 791.0L587.0 772.0" stroke="#ff0000" stroke-width="1.5" fill="none"/><path d="M681.5 756.0V785.0M672.0 766.0L681.5 785.0L691.0 766.0" stroke="#ff0000" stroke-width="1.5" fill="none"/><path d="M402.5 925.0V907.5M395.0 920.5L402.5 907.5L410.0 920.5" stroke="#00f000" stroke-width="1.2" fill="none"/><path d="M591.5 925.0V917.5M586.5 925.5L591.5 917.5L596.5 925.5" stroke="#00f000" stroke-width="1.2" fill="none"/><text x="79" y="768" font-size="14" font-weight="bold" text-anchor="start" fill="#000" stroke="#fff" stroke-width=".15" textLength="51.5" lengthAdjust="spacingAndGlyphs" >Osc 5,35</text><text x="703" y="789" font-size="14" font-weight="bold" text-anchor="start" fill="#000" stroke="#fff" stroke-width=".15" textLength="97.0" lengthAdjust="spacingAndGlyphs" >Osc Sell Signal</text></g><g font-size="12"><path d="M169.0 921.5L175.0 937.5H207.2L213.2 921.5" fill="#d4d0c8" stroke="#000" stroke-width="1"/><text x="191.4" y="933.5" text-anchor="middle" textLength="29.3" lengthAdjust="spacingAndGlyphs">CCI 20</text><path d="M206.7 921.5L212.7 937.5H293.0L299.0 921.5" fill="#d4d0c8" stroke="#000" stroke-width="1"/><text x="254.0" y="933.5" text-anchor="middle" textLength="74.0" lengthAdjust="spacingAndGlyphs">MACD 19, 39, 9</text><path d="M292.5 921.5L298.5 937.5H377.2L383.2 921.5" fill="#d4d0c8" stroke="#000" stroke-width="1"/><text x="338.4" y="933.5" text-anchor="middle" textLength="72.7" lengthAdjust="spacingAndGlyphs">Money Flow 11</text><path d="M376.7 921.5L382.7 937.5H443.0L449.0 921.5" fill="#d4d0c8" stroke="#000" stroke-width="1"/><text x="413.0" y="933.5" text-anchor="middle" textLength="54.0" lengthAdjust="spacingAndGlyphs">RSI 14, 7, 3</text><path d="M442.5 921.5L448.5 937.5H502.5L508.5 921.5" fill="#d4d0c8" stroke="#000" stroke-width="1"/><text x="475.3" y="933.5" text-anchor="middle" textLength="47.5" lengthAdjust="spacingAndGlyphs">RSI 2, 7, 3</text><path d="M502.0 921.5L508.0 937.5H608.5L614.5 921.5" fill="#d4d0c8" stroke="#000" stroke-width="1"/><text x="557.5" y="933.5" text-anchor="middle" textLength="94.0" lengthAdjust="spacingAndGlyphs">On Balance Volume</text><path d="M96 921.5H111.700L118 937.5H169L175 921.500" fill="#fff" stroke="none"/><path d="M111.700 921.5L118 937.5H169L175 921.500" fill="none" stroke="#000" stroke-width="1"/><rect x="112" y="920.500" width="63" height="2" fill="#fff"/><text x="143.700" y="933.5" text-anchor="middle" textLength="43.500" lengthAdjust="spacingAndGlyphs">Osc 5,35</text></g><g transform="translate(78,921)"><rect x="0.5" y="0.5" width="16" height="16" fill="#d4d0c8" stroke="#404040"/><path d="M1 16V1h15" stroke="#fff" fill="none"/><path d="M10 4v8l-5-4z" fill="#000"/></g><g transform="translate(95,921)"><rect x="0.5" y="0.5" width="16" height="16" fill="#d4d0c8" stroke="#404040"/><path d="M1 16V1h15" stroke="#fff" fill="none"/><path d="M6 4v8l5-4z" fill="#000"/></g><g fill="#000" shape-rendering="crispEdges"><rect x="1190" y="114" width="1" height="1"/><rect x="1190" y="120" width="1" height="1"/><rect x="1190" y="126" width="3" height="1"/><rect x="1190" y="131" width="1" height="1"/><rect x="1190" y="137" width="1" height="1"/><rect x="1190" y="143" width="1" height="1"/><rect x="1190" y="148" width="1" height="1"/><rect x="1190" y="154" width="6" height="1"/><rect x="1190" y="160" width="1" height="1"/><rect x="1190" y="165" width="1" height="1"/><rect x="1190" y="171" width="1" height="1"/><rect x="1190" y="177" width="1" height="1"/><rect x="1190" y="182" width="3" height="1"/><rect x="1190" y="188" width="1" height="1"/><rect x="1190" y="194" width="1" height="1"/><rect x="1190" y="199" width="1" height="1"/><rect x="1190" y="205" width="1" height="1"/><rect x="1190" y="211" width="6" height="1"/><rect x="1190" y="216" width="1" height="1"/><rect x="1190" y="222" width="1" height="1"/><rect x="1190" y="227" width="1" height="1"/><rect x="1190" y="233" width="1" height="1"/><rect x="1190" y="239" width="3" height="1"/><rect x="1190" y="244" width="1" height="1"/><rect x="1190" y="250" width="1" height="1"/><rect x="1190" y="256" width="1" height="1"/><rect x="1190" y="261" width="1" height="1"/><rect x="1190" y="267" width="6" height="1"/><rect x="1190" y="273" width="1" height="1"/><rect x="1190" y="278" width="1" height="1"/><rect x="1190" y="284" width="1" height="1"/><rect x="1190" y="290" width="1" height="1"/><rect x="1190" y="295" width="3" height="1"/><rect x="1190" y="301" width="1" height="1"/><rect x="1190" y="307" width="1" height="1"/><rect x="1190" y="312" width="1" height="1"/><rect x="1190" y="318" width="1" height="1"/><rect x="1190" y="324" width="6" height="1"/><rect x="1190" y="329" width="1" height="1"/><rect x="1190" y="335" width="1" height="1"/><rect x="1190" y="340" width="1" height="1"/><rect x="1190" y="346" width="1" height="1"/><rect x="1190" y="352" width="3" height="1"/><rect x="1190" y="357" width="1" height="1"/><rect x="1190" y="363" width="1" height="1"/><rect x="1190" y="369" width="1" height="1"/><rect x="1190" y="374" width="1" height="1"/><rect x="1190" y="380" width="6" height="1"/><rect x="1190" y="386" width="1" height="1"/><rect x="1190" y="391" width="1" height="1"/><rect x="1190" y="397" width="1" height="1"/><rect x="1190" y="403" width="1" height="1"/><rect x="1190" y="408" width="3" height="1"/><rect x="1190" y="414" width="1" height="1"/><rect x="1190" y="420" width="1" height="1"/><rect x="1190" y="425" width="1" height="1"/><rect x="1190" y="431" width="1" height="1"/><rect x="1190" y="437" width="6" height="1"/><rect x="1190" y="442" width="1" height="1"/><rect x="1190" y="448" width="1" height="1"/><rect x="1190" y="453" width="1" height="1"/><rect x="1190" y="459" width="1" height="1"/><rect x="1190" y="465" width="3" height="1"/><rect x="1190" y="470" width="1" height="1"/><rect x="1190" y="476" width="1" height="1"/><rect x="1190" y="482" width="1" height="1"/><rect x="1190" y="487" width="1" height="1"/><rect x="1190" y="493" width="6" height="1"/><rect x="1190" y="499" width="1" height="1"/><rect x="1190" y="504" width="1" height="1"/><rect x="1190" y="510" width="1" height="1"/><rect x="1190" y="516" width="1" height="1"/><rect x="1190" y="521" width="3" height="1"/><rect x="1190" y="527" width="1" height="1"/><rect x="1190" y="533" width="1" height="1"/><rect x="1190" y="538" width="1" height="1"/><rect x="1190" y="544" width="1" height="1"/><rect x="1190" y="550" width="6" height="1"/><rect x="1190" y="555" width="1" height="1"/><rect x="1190" y="561" width="1" height="1"/><rect x="1190" y="566" width="1" height="1"/><rect x="1190" y="572" width="1" height="1"/><rect x="1190" y="578" width="3" height="1"/><rect x="1190" y="583" width="1" height="1"/><rect x="1190" y="589" width="1" height="1"/><rect x="1190" y="595" width="1" height="1"/><rect x="1190" y="600" width="1" height="1"/><rect x="1190" y="606" width="6" height="1"/><rect x="1190" y="612" width="1" height="1"/><rect x="1190" y="617" width="1" height="1"/><rect x="1190" y="623" width="1" height="1"/><rect x="1190" y="629" width="1" height="1"/><rect x="1190" y="634" width="3" height="1"/><rect x="1190" y="640" width="1" height="1"/><rect x="1190" y="646" width="1" height="1"/><rect x="1190" y="651" width="1" height="1"/><rect x="1190" y="657" width="1" height="1"/><rect x="1190" y="663" width="6" height="1"/><rect x="1190" y="668" width="1" height="1"/><rect x="1190" y="674" width="1" height="1"/><rect x="1190" y="679" width="1" height="1"/><rect x="1190" y="685" width="1" height="1"/><rect x="1190" y="691" width="3" height="1"/><rect x="1190" y="696" width="1" height="1"/><rect x="1190" y="702" width="1" height="1"/><rect x="1190" y="708" width="1" height="1"/><rect x="1190" y="713" width="1" height="1"/><rect x="1190" y="719" width="6" height="1"/><rect x="1190" y="725" width="1" height="1"/><rect x="1190" y="730" width="1" height="1"/><rect x="1190" y="736" width="1" height="1"/><rect x="1190" y="742" width="1" height="1"/><rect x="1190" y="758" width="1" height="1"/><rect x="1190" y="761" width="1" height="1"/><rect x="1190" y="765" width="3" height="1"/><rect x="1190" y="768" width="1" height="1"/><rect x="1190" y="772" width="1" height="1"/><rect x="1190" y="775" width="1" height="1"/><rect x="1190" y="779" width="1" height="1"/><rect x="1190" y="782" width="3" height="1"/><rect x="1190" y="786" width="1" height="1"/><rect x="1190" y="790" width="1" height="1"/><rect x="1190" y="793" width="1" height="1"/><rect x="1190" y="797" width="1" height="1"/><rect x="1190" y="800" width="3" height="1"/><rect x="1190" y="804" width="1" height="1"/><rect x="1190" y="807" width="1" height="1"/><rect x="1190" y="811" width="1" height="1"/><rect x="1190" y="814" width="1" height="1"/><rect x="1190" y="818" width="3" height="1"/><rect x="1190" y="822" width="1" height="1"/><rect x="1190" y="825" width="1" height="1"/><rect x="1190" y="829" width="1" height="1"/><rect x="1190" y="832" width="1" height="1"/><rect x="1190" y="836" width="3" height="1"/><rect x="1190" y="839" width="1" height="1"/><rect x="1190" y="843" width="1" height="1"/><rect x="1190" y="846" width="1" height="1"/><rect x="1190" y="850" width="1" height="1"/><rect x="1190" y="854" width="3" height="1"/><rect x="1190" y="857" width="1" height="1"/><rect x="1190" y="861" width="1" height="1"/><rect x="1190" y="864" width="1" height="1"/><rect x="1190" y="868" width="1" height="1"/><rect x="1190" y="871" width="3" height="1"/><rect x="1190" y="875" width="1" height="1"/><rect x="1190" y="878" width="1" height="1"/><rect x="1190" y="882" width="1" height="1"/><rect x="1190" y="885" width="1" height="1"/><rect x="1190" y="889" width="3" height="1"/><rect x="1190" y="893" width="1" height="1"/><rect x="1190" y="896" width="1" height="1"/><rect x="1190" y="900" width="1" height="1"/><rect x="1190" y="903" width="1" height="1"/><rect x="1190" y="907" width="3" height="1"/><rect x="1190" y="910" width="1" height="1"/><rect x="1190" y="914" width="1" height="1"/><rect x="1190" y="917" width="1" height="1"/></g></svg></body></html>
